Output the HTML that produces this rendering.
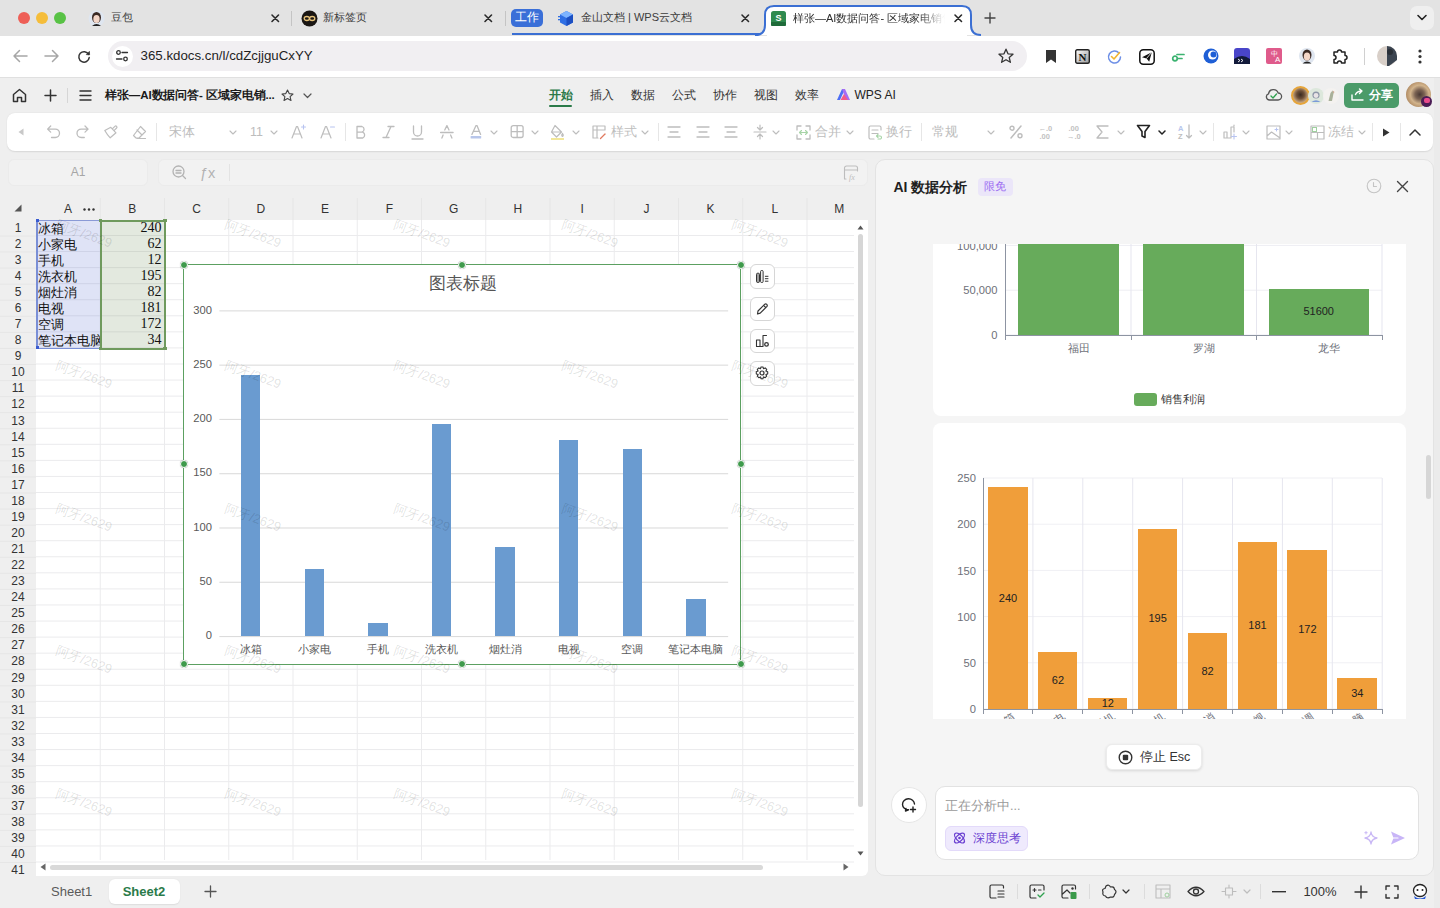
<!DOCTYPE html>
<html><head><meta charset="utf-8"><style>
*{box-sizing:border-box;margin:0;padding:0}
html,body{width:1440px;height:908px;overflow:hidden}
body{font-family:"Liberation Sans",sans-serif;background:#efefef;position:relative;color:#333}
.a{position:absolute}
svg.a{overflow:visible}
.t{position:absolute;white-space:nowrap;line-height:1}
</style></head><body>
<div class="a" style="left:0px;top:0px;width:1440px;height:36px;background:#e3e3e3"></div>
<div class="a" style="left:0px;top:36px;width:1440px;height:41px;background:#fff"></div>
<div class="a" style="left:0px;top:77px;width:1440px;height:1px;background:#e0e0e0"></div>
<div class="a" style="left:18px;top:12px;width:12px;height:12px;background:#ee5f57;border-radius:50%"></div>
<div class="a" style="left:36px;top:12px;width:12px;height:12px;background:#f5bd3a;border-radius:50%"></div>
<div class="a" style="left:54px;top:12px;width:12px;height:12px;background:#58c245;border-radius:50%"></div>
<svg class="a" style="left:88px;top:10px;" width="17" height="17" viewBox="0 0 17 17"><circle cx="8.5" cy="8.5" r="8" fill="#dfe6f0"/><ellipse cx="8.5" cy="7.5" rx="4.5" ry="5.5" fill="#3a2a25"/><ellipse cx="8.5" cy="9" rx="3.2" ry="4" fill="#f3d6c8"/><path d="M4 16 Q8.5 12 13 16" fill="#222"/></svg>
<div class="t" style="left:111px;top:11.40px;height:13.20px;line-height:13.20px;font-size:11px;color:#3c3c3c">豆包</div>
<svg class="a" style="left:270px;top:13px;" width="10" height="10" viewBox="0 0 10 10"><path d="M2 2L8.5 8.5M8.5 2L2 8.5" stroke="#2a2a2a" stroke-width="1.6" stroke-linecap="round"/></svg>
<div class="a" style="left:291px;top:11px;width:1px;height:15px;background:#c4c4c4"></div>
<svg class="a" style="left:301px;top:10px;" width="17" height="17" viewBox="0 0 17 17"><circle cx="8.5" cy="8.5" r="8" fill="#1a1613"/><ellipse cx="5.8" cy="8.5" rx="2.6" ry="2" fill="none" stroke="#e6c27a" stroke-width="1.3"/><ellipse cx="11.2" cy="8.5" rx="2.6" ry="2" fill="none" stroke="#e6c27a" stroke-width="1.3"/></svg>
<div class="t" style="left:323px;top:11.40px;height:13.20px;line-height:13.20px;font-size:11px;color:#3c3c3c">新标签页</div>
<svg class="a" style="left:483px;top:13px;" width="10" height="10" viewBox="0 0 10 10"><path d="M2 2L8.5 8.5M8.5 2L2 8.5" stroke="#2a2a2a" stroke-width="1.6" stroke-linecap="round"/></svg>
<div class="a" style="left:505px;top:11px;width:1px;height:15px;background:#c4c4c4"></div>
<div class="a" style="left:511px;top:9px;width:32px;height:18px;background:#3a6fd8;border-radius:5px"></div>
<div class="t" style="left:427px;top:11.10px;width:200px;height:13.80px;line-height:13.80px;text-align:center;font-size:11.5px;color:#fff;font-weight:500">工作</div>
<div class="a" style="left:512px;top:33px;width:255px;height:2px;background:#3b6fd3"></div>
<svg class="a" style="left:558px;top:10px;" width="17" height="17" viewBox="0 0 17 17"><path d="M8.5 1L15 4.5V12.5L8.5 16L2 12.5V4.5Z" fill="#2f6fe4"/><path d="M8.5 1L15 4.5L8.5 8L2 4.5Z" fill="#7db4ff"/><path d="M8.5 8V16L15 12.5V4.5Z" fill="#1c4fc2"/><rect x="0" y="6" width="5" height="1.3" fill="#2f6fe4"/><rect x="0" y="9" width="5" height="1.3" fill="#2f6fe4"/></svg>
<div class="t" style="left:581px;top:11.40px;height:13.20px;line-height:13.20px;font-size:11px;color:#3c3c3c">金山文档 | WPS云文档</div>
<svg class="a" style="left:740px;top:13px;" width="10" height="10" viewBox="0 0 10 10"><path d="M2 2L8.5 8.5M8.5 2L2 8.5" stroke="#2a2a2a" stroke-width="1.6" stroke-linecap="round"/></svg>
<svg class="a" style="left:755px;top:5px;" width="240" height="32" viewBox="0 0 240 32"><path d="M0 30 Q10 30 10 20 L10 10 Q10 1 19 1 L207 1 Q216 1 216 10 L216 20 Q216 30 226 30 Z" fill="#fff"/><path d="M0 30 Q10 30 10 20 L10 10 Q10 1 19 1 L207 1 Q216 1 216 10 L216 20 Q216 30 226 30" fill="none" stroke="#3b6fd3" stroke-width="2"/></svg>
<div class="a" style="left:767px;top:31px;width:200px;height:6px;background:#fff"></div>
<svg class="a" style="left:771px;top:11px;" width="15" height="15" viewBox="0 0 15 15"><rect x="0" y="0" width="15" height="15" rx="2.5" fill="#2f8a4f"/><rect x="0" y="11" width="15" height="4" rx="1" fill="#1f6b3a"/><text x="7.5" y="10" font-size="9" font-family="Liberation Sans" font-weight="bold" fill="#fff" text-anchor="middle">S</text></svg>
<div class="t" style="left:793px;top:10.8px;width:152px;overflow:hidden;font-size:11px;line-height:14.4px;color:#2c2c2c;-webkit-mask-image:linear-gradient(90deg,#000 82%,transparent)">样张—AI数据问答- 区域家电销售</div>
<svg class="a" style="left:953px;top:13px;" width="10" height="10" viewBox="0 0 10 10"><path d="M2 2L8.5 8.5M8.5 2L2 8.5" stroke="#2a2a2a" stroke-width="1.6" stroke-linecap="round"/></svg>
<svg class="a" style="left:984px;top:12px;" width="12" height="12" viewBox="0 0 12 12"><path d="M6 1V11M1 6H11" stroke="#444" stroke-width="1.4" stroke-linecap="round"/></svg>
<div class="a" style="left:1410px;top:6px;width:24px;height:24px;background:#efefef;border-radius:7px"></div>
<svg class="a" style="left:1417px;top:14px;" width="10" height="8" viewBox="0 0 10 8"><path d="M1 1.5L5 5.5L9 1.5" fill="none" stroke="#222" stroke-width="1.6" stroke-linecap="round" stroke-linejoin="round"/></svg>
<svg class="a" style="left:12px;top:49px;" width="16" height="14" viewBox="0 0 16 14"><path d="M15 7H2M7.5 1.5L2 7L7.5 12.5" fill="none" stroke="#a6a6a6" stroke-width="1.5" stroke-linecap="round" stroke-linejoin="round"/></svg>
<svg class="a" style="left:44px;top:49px;" width="16" height="14" viewBox="0 0 16 14"><path d="M1 7H14M8.5 1.5L14 7L8.5 12.5" fill="none" stroke="#a6a6a6" stroke-width="1.5" stroke-linecap="round" stroke-linejoin="round"/></svg>
<svg class="a" style="left:77px;top:50px;" width="14" height="14" viewBox="0 0 14 14"><path d="M11.6 4.4A5.2 5.2 0 1 0 12.2 7.6" fill="none" stroke="#333" stroke-width="1.5" stroke-linecap="round"/><path d="M9.3 4.6L12.6 4.8L12.4 1.4Z" fill="#333" stroke="#333" stroke-width="0.7" stroke-linejoin="round"/></svg>
<div class="a" style="left:108px;top:41px;width:919px;height:30px;background:#f1eff2;border-radius:15px"></div>
<div class="a" style="left:111.5px;top:45.5px;width:21px;height:21px;background:#fff;border-radius:50%"></div>
<svg class="a" style="left:115px;top:49px;" width="14" height="14" viewBox="0 0 14 14"><circle cx="3.5" cy="3.5" r="1.8" fill="none" stroke="#333" stroke-width="1.3"/><path d="M7 3.5H12.5M1.5 10H7" stroke="#333" stroke-width="1.3" stroke-linecap="round"/><circle cx="10.5" cy="10" r="1.8" fill="none" stroke="#333" stroke-width="1.3"/></svg>
<div class="t" style="left:140.5px;top:48.02px;height:15.96px;line-height:15.96px;font-size:13.3px;color:#1f1f1f">365.kdocs.cn/l/cdZcjjguCxYY</div>
<svg class="a" style="left:998px;top:48px;" width="16" height="16" viewBox="0 0 16 16"><path d="M8 1.2L10 5.8L15 6.2L11.2 9.4L12.4 14.3L8 11.7L3.6 14.3L4.8 9.4L1 6.2L6 5.8Z" fill="none" stroke="#333" stroke-width="1.3" stroke-linejoin="round"/></svg>
<svg class="a" style="left:1045px;top:49px;" width="12" height="15" viewBox="0 0 12 15"><path d="M1 1H11V14L6 10.5L1 14Z" fill="#333"/></svg>
<svg class="a" style="left:1075px;top:49px;" width="15" height="15" viewBox="0 0 15 15"><defs><linearGradient id="ng" x1="0" y1="0" x2="1" y2="1"><stop offset="0" stop-color="#fff"/><stop offset="1" stop-color="#9a9a9a"/></linearGradient></defs><rect x="0.7" y="0.7" width="13.6" height="13.6" rx="1.5" fill="url(#ng)" stroke="#222" stroke-width="1.4"/><text x="7.5" y="11.8" font-size="11" font-family="Liberation Serif" font-weight="bold" fill="#111" text-anchor="middle">N</text></svg>
<svg class="a" style="left:1107px;top:49px;" width="15" height="15" viewBox="0 0 15 15"><path d="M12 4A6 6 0 1 0 13.5 8" fill="none" stroke="#6d8fe6" stroke-width="1.5" stroke-linecap="round"/><path d="M4.5 7.5L7 10L12.5 3.5" fill="none" stroke="#f2b531" stroke-width="1.6" stroke-linecap="round" stroke-linejoin="round"/></svg>
<svg class="a" style="left:1139px;top:49px;" width="16" height="16" viewBox="0 0 16 16"><rect x="0.8" y="0.8" width="14.4" height="14.4" rx="3.5" fill="#fff" stroke="#111" stroke-width="1.5"/><path d="M3 8.3L12.8 3.2L10.2 12.8L7.6 9.4Z" fill="#111"/><path d="M7.6 9.4L12.8 3.2" stroke="#fff" stroke-width="0.8"/></svg>
<svg class="a" style="left:1171px;top:49px;" width="15" height="15" viewBox="0 0 15 15"><circle cx="4" cy="9.5" r="2.3" fill="none" stroke="#3cb371" stroke-width="1.7"/><path d="M6.5 9.5H11M6 5.5H13" fill="none" stroke="#3cb371" stroke-width="1.7" stroke-linecap="round"/></svg>
<svg class="a" style="left:1203px;top:48px;" width="16" height="16" viewBox="0 0 16 16"><circle cx="8" cy="8" r="7.5" fill="#1f5fd6"/><circle cx="9.5" cy="7" r="4.5" fill="#fff"/><circle cx="10.5" cy="6.5" r="3" fill="#1f5fd6"/></svg>
<svg class="a" style="left:1234px;top:48px;" width="16" height="16" viewBox="0 0 16 16"><rect x="0" y="0" width="16" height="16" rx="3" fill="#4945c9"/><path d="M0 11Q8 5 16 11V16H0Z" fill="#121a3a"/><path d="M4 11L6 12.5L4 14M7 11L9 12.5L7 14" stroke="#fff" stroke-width="0.9" fill="none"/></svg>
<svg class="a" style="left:1266px;top:48px;" width="16" height="16" viewBox="0 0 16 16"><rect x="0" y="0" width="16" height="16" rx="2" fill="#df5b8b"/><text x="5" y="8" font-size="7" fill="#fff" font-family="Liberation Sans">中</text><text x="9" y="14" font-size="8" fill="#fff" font-family="Liberation Sans">A</text></svg>
<svg class="a" style="left:1299px;top:48px;" width="16" height="16" viewBox="0 0 16 16"><circle cx="8" cy="8" r="8" fill="#dfe6f0"/><ellipse cx="8" cy="7" rx="4.5" ry="5.5" fill="#3a2a25"/><ellipse cx="8" cy="8.5" rx="3.2" ry="4" fill="#f3d6c8"/><path d="M3.5 15.5Q8 11.5 12.5 15.5" fill="#222"/></svg>
<svg class="a" style="left:1332px;top:48px;" width="16" height="16" viewBox="0 0 16 16"><path d="M2 4H5.5A2 2 0 0 1 9.5 4H13V7.5A2 2 0 0 1 13 11.5V15H9.5A2 2 0 0 0 5.5 15H2V11.5A2 2 0 0 0 2 7.5Z" fill="none" stroke="#222" stroke-width="1.5" stroke-linejoin="round"/></svg>
<div class="a" style="left:1364px;top:48px;width:1px;height:17px;background:#d0d0d0"></div>
<svg class="a" style="left:1377px;top:46px;" width="20" height="20" viewBox="0 0 20 20"><circle cx="10" cy="10" r="10" fill="#d8cfc8"/><path d="M10 0A10 10 0 0 1 20 10V14L12 20H10Z" fill="#3b4450"/><circle cx="13" cy="6" r="3" fill="#2a2f36"/></svg>
<svg class="a" style="left:1418px;top:49px;" width="4" height="15" viewBox="0 0 4 15"><circle cx="2" cy="2" r="1.6" fill="#333"/><circle cx="2" cy="7.5" r="1.6" fill="#333"/><circle cx="2" cy="13" r="1.6" fill="#333"/></svg>
<div class="a" style="left:0px;top:78px;width:1440px;height:830px;background:#efefef"></div>
<svg class="a" style="left:12px;top:88px;" width="15" height="15" viewBox="0 0 15 15"><path d="M1.5 6.5L7.5 1.5L13.5 6.5V13.5H9.5V9.5H5.5V13.5H1.5Z" fill="none" stroke="#333" stroke-width="1.5" stroke-linecap="round" stroke-linejoin="round" /></svg>
<svg class="a" style="left:44px;top:89px;" width="13" height="13" viewBox="0 0 13 13"><path d="M6.5 1V12M1 6.5H12" fill="none" stroke="#333" stroke-width="1.5" stroke-linecap="round" stroke-linejoin="round" /></svg>
<div class="a" style="left:67px;top:88px;width:1px;height:15px;background:#d6d6d6"></div>
<svg class="a" style="left:79px;top:90px;" width="13" height="11" viewBox="0 0 13 11"><path d="M1 1H12M1 5.5H12M1 10H12" fill="none" stroke="#333" stroke-width="1.4" stroke-linecap="round" stroke-linejoin="round" /></svg>
<div class="t" style="left:105px;top:88.60px;height:13.80px;line-height:13.80px;font-size:11.5px;color:#1a1a1a;font-weight:bold;letter-spacing:-0.1px">样张—AI数据问答- 区域家电销...</div>
<svg class="a" style="left:281px;top:89px;" width="13" height="13" viewBox="0 0 13 13"><path d="M6.5 1L8.2 4.6L12 5L9.1 7.6L10 11.5L6.5 9.5L3 11.5L3.9 7.6L1 5L4.8 4.6Z" fill="none" stroke="#444" stroke-width="1.1" stroke-linecap="round" stroke-linejoin="round" /></svg>
<svg class="a" style="left:303px;top:93px;" width="9" height="6" viewBox="0 0 9 6"><path d="M1 1L4.5 4.5L8 1" fill="none" stroke="#555" stroke-width="1.2" stroke-linecap="round" stroke-linejoin="round" /></svg>
<div class="t" style="left:548.5px;top:87.80px;height:14.40px;line-height:14.40px;font-size:12px;color:#2a7a49;font-weight:bold">开始</div>
<div class="t" style="left:589.5px;top:87.80px;height:14.40px;line-height:14.40px;font-size:12px;color:#333;">插入</div>
<div class="t" style="left:630.5px;top:87.80px;height:14.40px;line-height:14.40px;font-size:12px;color:#333;">数据</div>
<div class="t" style="left:671.5px;top:87.80px;height:14.40px;line-height:14.40px;font-size:12px;color:#333;">公式</div>
<div class="t" style="left:712.5px;top:87.80px;height:14.40px;line-height:14.40px;font-size:12px;color:#333;">协作</div>
<div class="t" style="left:753.5px;top:87.80px;height:14.40px;line-height:14.40px;font-size:12px;color:#333;">视图</div>
<div class="t" style="left:794.5px;top:87.80px;height:14.40px;line-height:14.40px;font-size:12px;color:#333;">效率</div>
<div class="a" style="left:549px;top:105px;width:22.5px;height:2px;background:#2a7a49;border-radius:1px"></div>
<svg class="a" style="left:836px;top:88px;" width="15" height="13" viewBox="0 0 15 13"><path d="M1 12L6 1H9L4 12Z" fill="#4d6ef5"/><path d="M6 1H9L14 12H10Z" fill="#a46cf4"/><path d="M4.5 12L8 6L12 12Z" fill="#f25a8a"/></svg>
<div class="t" style="left:854.5px;top:87.80px;height:14.40px;line-height:14.40px;font-size:12px;color:#222">WPS AI</div>
<svg class="a" style="left:1265px;top:88px;" width="17" height="13" viewBox="0 0 17 13"><path d="M4.5 12H13A3.5 3.5 0 0 0 13.2 5A5 5 0 0 0 3.5 5.8A3.2 3.2 0 0 0 4.5 12Z" fill="none" stroke="#555" stroke-width="1.3"/><path d="M6 8L8 10L11.5 6" fill="none" stroke="#2fa14f" stroke-width="1.3" stroke-linecap="round" stroke-linejoin="round"/></svg>
<div class="a" style="left:1291px;top:86px;width:19px;height:19px;border-radius:50%;background:radial-gradient(circle at 50% 45%,#3a2a20 0,#6e5038 35%,#c7a680 70%,#a88a66 100%);border:2px solid #e6a53a"></div>
<div class="a" style="left:1307.5px;top:87.5px;width:16px;height:16px;border-radius:50%;background:#dde8dc"></div>
<svg class="a" style="left:1309.5px;top:89.5px;" width="12" height="13" viewBox="0 0 12 13"><circle cx="6" cy="5" r="3.6" fill="#8e97a8"/><circle cx="6" cy="5.5" r="2.4" fill="#e9e4e6"/><path d="M1.5 12Q6 8.5 10.5 12" fill="#7b9bd8"/></svg>
<div class="a" style="left:1322.5px;top:87.5px;width:16px;height:16px;border-radius:50%;background:#f4f2f0"></div>
<svg class="a" style="left:1326px;top:89px;" width="9" height="13" viewBox="0 0 9 13"><path d="M2.5 12L4.5 4L6.5 1.5L7.5 4.5L6 12Z" fill="#a9b19a"/><path d="M6.5 1.5L8.5 3L7.5 4.5Z" fill="#c9a38a"/></svg>
<div class="a" style="left:1344px;top:82.5px;width:55px;height:25px;background:#4b9b69;border-radius:5px"></div>
<svg class="a" style="left:1351px;top:89px;" width="14" height="12" viewBox="0 0 14 12"><path d="M1 6V11H12M4.5 5.5Q6 2 11 2M8.5 0L11 2L8.5 4.5" fill="none" stroke="#fff" stroke-width="1.4" stroke-linecap="round" stroke-linejoin="round" /></svg>
<div class="t" style="left:1368.5px;top:87.80px;height:14.40px;line-height:14.40px;font-size:12px;color:#fff;font-weight:bold">分享</div>
<div class="a" style="left:1405.5px;top:82px;width:25px;height:25px;border-radius:50%;background:radial-gradient(circle at 55% 50%,#4a3a35 0,#7a6252 25%,#d2b48c 50%,#b08a62 75%,#3b2a20 100%)"></div>
<div class="a" style="left:1421px;top:95.5px;width:11px;height:11px;border-radius:50%;background:#4b1d55"></div>
<div class="a" style="left:1423.5px;top:98px;width:6px;height:5px;border-radius:2px;background:#e94a8c"></div>
<div class="a" style="left:7px;top:113px;width:1426px;height:38px;background:#fff;border-radius:8px;box-shadow:0 0.5px 1.5px rgba(0,0,0,0.10)"></div>
<svg class="a" style="left:18px;top:128px;" width="6" height="8" viewBox="0 0 6 8"><path d="M5.5 0.5V7.5L0.5 4Z" fill="#c8c8c8"/></svg>
<svg class="a" style="left:46px;top:125px;" width="15" height="15" viewBox="0 0 15 15"><path d="M4.7 1L1.6 4.1L4.7 7.1M1.6 4.1H9.3A4.2 4.2 0 0 1 9.3 12.5H5.5" fill="none" stroke="#bdbdbd" stroke-width="1.3" stroke-linecap="round" stroke-linejoin="round" /></svg>
<svg class="a" style="left:75px;top:125px;" width="15" height="15" viewBox="0 0 15 15"><path d="M10 1L13.1 4.1L10 7.1M13.1 4.1H6.2A4.2 4.2 0 0 0 6.2 12.5H9.3" fill="none" stroke="#bdbdbd" stroke-width="1.3" stroke-linecap="round" stroke-linejoin="round" /></svg>
<svg class="a" style="left:104px;top:125px;" width="15" height="15" viewBox="0 0 15 15"><path d="M0.8 5.5L6.8 2.3L12 7.8L6.2 12.8Q3.2 9.8 0.8 5.5ZM8.8 3.4L10.9 1.3A1.2 1.2 0 0 1 12.6 3L10.5 5.1" fill="none" stroke="#bdbdbd" stroke-width="1.2" stroke-linecap="round" stroke-linejoin="round" /></svg>
<svg class="a" style="left:132px;top:125px;" width="15" height="15" viewBox="0 0 15 15"><path d="M8.5 1.5L13.5 6.5L7 13H4L1.5 10.5ZM5 5L10 10M5 13.5H13.5" fill="none" stroke="#bdbdbd" stroke-width="1.2" stroke-linecap="round" stroke-linejoin="round" /></svg>
<div class="a" style="left:156px;top:123px;width:1px;height:18px;background:#e6e6e6"></div>
<div class="t" style="left:169px;top:124.50px;height:15.00px;line-height:15.00px;font-size:12.5px;color:#bdbdbd">宋体</div>
<svg class="a" style="left:229px;top:130px;" width="8" height="5" viewBox="0 0 8 5"><path d="M1 1L4 4L7 1" fill="none" stroke="#bdbdbd" stroke-width="1.1" stroke-linecap="round" stroke-linejoin="round" /></svg>
<div class="t" style="left:250px;top:124.50px;height:15.00px;line-height:15.00px;font-size:12.5px;color:#bdbdbd">11</div>
<svg class="a" style="left:270px;top:130px;" width="8" height="5" viewBox="0 0 8 5"><path d="M1 1L4 4L7 1" fill="none" stroke="#bdbdbd" stroke-width="1.1" stroke-linecap="round" stroke-linejoin="round" /></svg>
<svg class="a" style="left:291px;top:124px;" width="16" height="16" viewBox="0 0 16 16"><path d="M1 14L5.5 2.5H6.5L11 14M2.8 10H9.2" fill="none" stroke="#bdbdbd" stroke-width="1.2" stroke-linecap="round" stroke-linejoin="round" /><path d="M12.5 1V5M10.5 3H14.5" fill="none" stroke="#b8c4f0" stroke-width="1.1" stroke-linecap="round" stroke-linejoin="round" /></svg>
<svg class="a" style="left:320px;top:124px;" width="16" height="16" viewBox="0 0 16 16"><path d="M1 14L5.5 2.5H6.5L11 14M2.8 10H9.2" fill="none" stroke="#bdbdbd" stroke-width="1.2" stroke-linecap="round" stroke-linejoin="round" /><path d="M10.5 3H14.5" fill="none" stroke="#b8c4f0" stroke-width="1.1" stroke-linecap="round" stroke-linejoin="round" /></svg>
<div class="a" style="left:345px;top:123px;width:1px;height:18px;background:#e6e6e6"></div>
<svg class="a" style="left:355px;top:125px;" width="12" height="14" viewBox="0 0 12 14"><path d="M2 1.5H7A3 3 0 0 1 7 7.2H2ZM2 7.2H7.8A3.2 3.2 0 0 1 7.8 13H2Z" fill="none" stroke="#bdbdbd" stroke-width="1.3" stroke-linecap="round" stroke-linejoin="round" /></svg>
<svg class="a" style="left:382px;top:125px;" width="13" height="14" viewBox="0 0 13 14"><path d="M6 1.5H12M1 12.5H7M9 1.5L4 12.5" fill="none" stroke="#bdbdbd" stroke-width="1.3" stroke-linecap="round" stroke-linejoin="round" /></svg>
<svg class="a" style="left:411px;top:125px;" width="13" height="15" viewBox="0 0 13 15"><path d="M2.5 1V7A4 4 0 0 0 10.5 7V1M1 14H12" fill="none" stroke="#bdbdbd" stroke-width="1.3" stroke-linecap="round" stroke-linejoin="round" /></svg>
<svg class="a" style="left:439px;top:124px;" width="16" height="16" viewBox="0 0 16 16"><path d="M5.75 6L7.9 1.6L10 6M1.6 8.5H14.1M4.1 11L2.9 14.1M11.6 11L12.9 14.1" fill="none" stroke="#bdbdbd" stroke-width="1.3" stroke-linecap="round" stroke-linejoin="round" /></svg>
<svg class="a" style="left:469px;top:124px;" width="15" height="16" viewBox="0 0 15 16"><path d="M2.9 10.4L7 1.6H8L11.6 10.4M4.3 7.4H10.3" fill="none" stroke="#bdbdbd" stroke-width="1.3" stroke-linecap="round" stroke-linejoin="round" /><rect x="1.6" y="12" width="10.6" height="2.5" rx="0.5" fill="#b8c6ea"/></svg>
<svg class="a" style="left:490px;top:130px;" width="8" height="5" viewBox="0 0 8 5"><path d="M1 1L4 4L7 1" fill="none" stroke="#bdbdbd" stroke-width="1.1" stroke-linecap="round" stroke-linejoin="round" /></svg>
<svg class="a" style="left:510px;top:125px;" width="15" height="14" viewBox="0 0 15 14"><path d="M3.2 0.7H11.1A2 2 0 0 1 13.1 2.7V10.5A2 2 0 0 1 11.1 12.5H3.2A2 2 0 0 1 1.2 10.5V2.7A2 2 0 0 1 3.2 0.7ZM7.15 0.7V12.5M1.2 6.6H13.1" fill="none" stroke="#bdbdbd" stroke-width="1.3" stroke-linecap="round" stroke-linejoin="round" /></svg>
<svg class="a" style="left:531px;top:130px;" width="8" height="5" viewBox="0 0 8 5"><path d="M1 1L4 4L7 1" fill="none" stroke="#bdbdbd" stroke-width="1.1" stroke-linecap="round" stroke-linejoin="round" /></svg>
<svg class="a" style="left:550px;top:124px;" width="15" height="16" viewBox="0 0 15 16"><path d="M5 1.5L11.5 8L6.5 13L1.5 8ZM1.5 8H11.5M12.5 9.5Q14 11.5 12.5 12.5Q11 11.5 12.5 9.5" fill="none" stroke="#bdbdbd" stroke-width="1.2" stroke-linecap="round" stroke-linejoin="round" /><rect x="1" y="14" width="13" height="2" fill="#f2e79a"/></svg>
<svg class="a" style="left:572px;top:130px;" width="8" height="5" viewBox="0 0 8 5"><path d="M1 1L4 4L7 1" fill="none" stroke="#bdbdbd" stroke-width="1.1" stroke-linecap="round" stroke-linejoin="round" /></svg>
<svg class="a" style="left:592px;top:125px;" width="15" height="15" viewBox="0 0 15 15"><path d="M1 1H13V5M1 1V13H6M5 1V13M1 5H13" fill="none" stroke="#bdbdbd" stroke-width="1.2" stroke-linecap="round" stroke-linejoin="round" /><path d="M8.5 13.5L13 9" fill="none" stroke="#e07a5f" stroke-width="1.3" stroke-linecap="round" stroke-linejoin="round" /></svg>
<div class="t" style="left:611px;top:124.50px;height:15.00px;line-height:15.00px;font-size:12.5px;color:#bdbdbd">样式</div>
<svg class="a" style="left:641px;top:130px;" width="8" height="5" viewBox="0 0 8 5"><path d="M1 1L4 4L7 1" fill="none" stroke="#bdbdbd" stroke-width="1.1" stroke-linecap="round" stroke-linejoin="round" /></svg>
<div class="a" style="left:658px;top:123px;width:1px;height:18px;background:#e6e6e6"></div>
<svg class="a" style="left:667px;top:126px;" width="14" height="12" viewBox="0 0 14 12"><path d="M1 1H13M3 6H11M1 11H13" fill="none" stroke="#bdbdbd" stroke-width="1.3" stroke-linecap="round" stroke-linejoin="round" /></svg>
<svg class="a" style="left:696px;top:126px;" width="14" height="12" viewBox="0 0 14 12"><path d="M1 1H13M3 6H11M1 11H13" fill="none" stroke="#bdbdbd" stroke-width="1.3" stroke-linecap="round" stroke-linejoin="round" /></svg>
<svg class="a" style="left:724px;top:126px;" width="14" height="12" viewBox="0 0 14 12"><path d="M1 1H13M3 6H11M1 11H13" fill="none" stroke="#bdbdbd" stroke-width="1.3" stroke-linecap="round" stroke-linejoin="round" /></svg>
<svg class="a" style="left:753px;top:124px;" width="14" height="16" viewBox="0 0 14 16"><path d="M1 8H13M7 1V6M4.5 3.5L7 6L9.5 3.5M7 15V10M4.5 12.5L7 10L9.5 12.5" fill="none" stroke="#bdbdbd" stroke-width="1.2" stroke-linecap="round" stroke-linejoin="round" /></svg>
<svg class="a" style="left:772px;top:130px;" width="8" height="5" viewBox="0 0 8 5"><path d="M1 1L4 4L7 1" fill="none" stroke="#bdbdbd" stroke-width="1.1" stroke-linecap="round" stroke-linejoin="round" /></svg>
<svg class="a" style="left:796px;top:125px;" width="15" height="15" viewBox="0 0 15 15"><path d="M5 1H1V5M10 1H14V5M5 14H1V10M10 14H14V10" fill="none" stroke="#bdbdbd" stroke-width="1.3" stroke-linecap="round" stroke-linejoin="round" /><path d="M3.5 7.5H11.5M9.5 5.5L11.5 7.5L9.5 9.5M5.5 5.5L3.5 7.5L5.5 9.5" fill="none" stroke="#a7d4a7" stroke-width="1.1" stroke-linecap="round" stroke-linejoin="round" /></svg>
<div class="t" style="left:815px;top:124.50px;height:15.00px;line-height:15.00px;font-size:12.5px;color:#bdbdbd">合并</div>
<svg class="a" style="left:846px;top:130px;" width="8" height="5" viewBox="0 0 8 5"><path d="M1 1L4 4L7 1" fill="none" stroke="#bdbdbd" stroke-width="1.1" stroke-linecap="round" stroke-linejoin="round" /></svg>
<svg class="a" style="left:868px;top:125px;" width="14" height="15" viewBox="0 0 14 15"><path d="M13 5V2.5A1.5 1.5 0 0 0 11.5 1H2.5A1.5 1.5 0 0 0 1 2.5V12.5A1.5 1.5 0 0 0 2.5 14H6M4 5H10M4 8.5H10" fill="none" stroke="#bdbdbd" stroke-width="1.2" stroke-linecap="round" stroke-linejoin="round" /><path d="M10 14H12A1.5 1.5 0 0 0 12 11H9M10 9.5L8.5 11L10 12.5" fill="none" stroke="#a7d4a7" stroke-width="1.1" stroke-linecap="round" stroke-linejoin="round" /></svg>
<div class="t" style="left:886px;top:124.50px;height:15.00px;line-height:15.00px;font-size:12.5px;color:#bdbdbd">换行</div>
<div class="a" style="left:921px;top:123px;width:1px;height:18px;background:#e6e6e6"></div>
<div class="t" style="left:932px;top:124.50px;height:15.00px;line-height:15.00px;font-size:12.5px;color:#bdbdbd">常规</div>
<svg class="a" style="left:987px;top:130px;" width="8" height="5" viewBox="0 0 8 5"><path d="M1 1L4 4L7 1" fill="none" stroke="#bdbdbd" stroke-width="1.1" stroke-linecap="round" stroke-linejoin="round" /></svg>
<svg class="a" style="left:1009px;top:125px;" width="14" height="14" viewBox="0 0 14 14"><path d="M2 13L12 1" fill="none" stroke="#bdbdbd" stroke-width="1.5" stroke-linecap="round" stroke-linejoin="round" /><circle cx="3" cy="3.2" r="2" fill="none" stroke="#bdbdbd" stroke-width="1.4"/><circle cx="11" cy="10.8" r="2" fill="none" stroke="#bdbdbd" stroke-width="1.4"/></svg>
<svg class="a" style="left:1036px;top:123px;" width="18" height="18" viewBox="0 0 18 18"><text x="2.5" y="7.5" font-size="7.5" font-weight="bold" fill="#c2c2c2" font-family="Liberation Sans">←.0</text><text x="3.5" y="16" font-size="7.5" font-weight="bold" fill="#c2c2c2" font-family="Liberation Sans">.00</text></svg>
<svg class="a" style="left:1065px;top:123px;" width="18" height="18" viewBox="0 0 18 18"><text x="3.5" y="7.5" font-size="7.5" font-weight="bold" fill="#c2c2c2" font-family="Liberation Sans">.00</text><text x="2" y="16" font-size="7.5" font-weight="bold" fill="#c2c2c2" font-family="Liberation Sans">→.0</text></svg>
<svg class="a" style="left:1096px;top:125px;" width="13" height="14" viewBox="0 0 13 14"><path d="M12 1H1L6 7L1 13H12" fill="none" stroke="#bdbdbd" stroke-width="1.3" stroke-linecap="round" stroke-linejoin="round" /></svg>
<svg class="a" style="left:1117px;top:130px;" width="8" height="5" viewBox="0 0 8 5"><path d="M1 1L4 4L7 1" fill="none" stroke="#bdbdbd" stroke-width="1.1" stroke-linecap="round" stroke-linejoin="round" /></svg>
<svg class="a" style="left:1136px;top:124px;" width="15" height="15" viewBox="0 0 15 15"><path d="M1.5 1.5H13.5L9 7.5V13.5L6 12V7.5Z" fill="none" stroke="#222" stroke-width="1.6" stroke-linecap="round" stroke-linejoin="round" /></svg>
<svg class="a" style="left:1158px;top:130px;" width="8" height="5" viewBox="0 0 8 5"><path d="M1 1L4 4L7 1" fill="none" stroke="#bdbdbd" stroke-width="1.1" stroke-linecap="round" stroke-linejoin="round" /></svg>
<svg class="a" style="left:1158px;top:130px;" width="8" height="5" viewBox="0 0 8 5"><path d="M1 1L4 4L7 1" fill="none" stroke="#222" stroke-width="1.4" stroke-linecap="round" stroke-linejoin="round" /></svg>
<svg class="a" style="left:1178px;top:124px;" width="15" height="16" viewBox="0 0 15 16"><text x="0" y="7" font-size="7.5" font-weight="bold" fill="#b7c6ec" font-family="Liberation Sans">A</text><text x="0" y="15" font-size="7.5" font-weight="bold" fill="#bdbdbd" font-family="Liberation Sans">Z</text><path d="M11 1V14M8.5 11.5L11 14L13.5 11.5" fill="none" stroke="#bdbdbd" stroke-width="1.3" stroke-linecap="round" stroke-linejoin="round" /></svg>
<svg class="a" style="left:1199px;top:130px;" width="8" height="5" viewBox="0 0 8 5"><path d="M1 1L4 4L7 1" fill="none" stroke="#bdbdbd" stroke-width="1.1" stroke-linecap="round" stroke-linejoin="round" /></svg>
<div class="a" style="left:1213px;top:123px;width:1px;height:18px;background:#e6e6e6"></div>
<svg class="a" style="left:1223px;top:124px;" width="15" height="16" viewBox="0 0 15 16"><path d="M1 14V8H4V14ZM4 14H8V3H11V8M11 2V1" fill="none" stroke="#bdbdbd" stroke-width="1.2" stroke-linecap="round" stroke-linejoin="round" /><path d="M11 10V15M8.5 12.5H13.5" fill="none" stroke="#b8c4f0" stroke-width="1.1" stroke-linecap="round" stroke-linejoin="round" /></svg>
<svg class="a" style="left:1242px;top:130px;" width="8" height="5" viewBox="0 0 8 5"><path d="M1 1L4 4L7 1" fill="none" stroke="#bdbdbd" stroke-width="1.1" stroke-linecap="round" stroke-linejoin="round" /></svg>
<svg class="a" style="left:1266px;top:125px;" width="15" height="15" viewBox="0 0 15 15"><path d="M1 1H14V14H1ZM1 11L5.5 7L14 13" fill="none" stroke="#bdbdbd" stroke-width="1.2" stroke-linecap="round" stroke-linejoin="round" /><path d="M10.5 3V6M9 4.5H12" fill="none" stroke="#b8c4f0" stroke-width="1" stroke-linecap="round" stroke-linejoin="round" /></svg>
<svg class="a" style="left:1285px;top:130px;" width="8" height="5" viewBox="0 0 8 5"><path d="M1 1L4 4L7 1" fill="none" stroke="#bdbdbd" stroke-width="1.1" stroke-linecap="round" stroke-linejoin="round" /></svg>
<svg class="a" style="left:1310px;top:125px;" width="15" height="15" viewBox="0 0 15 15"><path d="M1 1H14V14H1ZM1 7.5H14M7.5 7.5V14" fill="none" stroke="#bdbdbd" stroke-width="1.2" stroke-linecap="round" stroke-linejoin="round" /><rect x="2.5" y="2.5" width="4" height="4" fill="none" stroke="#9fd09f" stroke-width="1"/></svg>
<div class="t" style="left:1328px;top:124.50px;height:15.00px;line-height:15.00px;font-size:12.5px;color:#bdbdbd">冻结</div>
<svg class="a" style="left:1358px;top:130px;" width="8" height="5" viewBox="0 0 8 5"><path d="M1 1L4 4L7 1" fill="none" stroke="#bdbdbd" stroke-width="1.1" stroke-linecap="round" stroke-linejoin="round" /></svg>
<div class="a" style="left:1372px;top:123px;width:1px;height:18px;background:#e6e6e6"></div>
<svg class="a" style="left:1382px;top:128px;" width="8" height="9" viewBox="0 0 8 9"><path d="M1 0.5L7.5 4.5L1 8.5Z" fill="#333"/></svg>
<div class="a" style="left:1400px;top:123px;width:1px;height:18px;background:#e6e6e6"></div>
<svg class="a" style="left:1409px;top:129px;" width="12" height="7" viewBox="0 0 12 7"><path d="M1 6L6 1L11 6" fill="none" stroke="#333" stroke-width="1.5" stroke-linecap="round" stroke-linejoin="round" /></svg>
<div class="a" style="left:8px;top:159px;width:140px;height:27px;background:#f2f2f2;border-radius:6px;border:1px solid #ebebeb"></div>
<div class="t" style="left:-22px;top:165.30px;width:200px;height:14.40px;line-height:14.40px;text-align:center;font-size:12px;color:#a6a6a6">A1</div>
<div class="a" style="left:158px;top:159px;width:710px;height:27px;background:#f2f2f2;border-radius:6px;border:1px solid #ebebeb"></div>
<svg class="a" style="left:172px;top:165px;" width="15" height="15" viewBox="0 0 15 15"><circle cx="6.5" cy="6.5" r="5.5" fill="none" stroke="#b3b3b3" stroke-width="1.3"/><path d="M10.5 10.5L13.5 13.5M4 5.5H9M4 8H9" fill="none" stroke="#b3b3b3" stroke-width="1.3" stroke-linecap="round" stroke-linejoin="round" /></svg>
<div class="t" style="left:200px;top:164.5px;font-size:14.5px;line-height:17px;color:#b3b3b3">ƒx</div>
<div class="a" style="left:229px;top:164px;width:1px;height:17px;background:#e3e3e3"></div>
<svg class="a" style="left:843px;top:165px;" width="16" height="16" viewBox="0 0 16 16"><path d="M1.5 14V3A2 2 0 0 1 3.5 1H12.5A2 2 0 0 1 14.5 3V6M1.5 5H14.5M1.5 14H3" fill="none" stroke="#bdbdbd" stroke-width="1.1" stroke-linecap="round" stroke-linejoin="round" /><text x="6" y="15" font-size="8" font-style="italic" fill="#bdbdbd" font-family="Liberation Serif">fx</text></svg>
<div class="a" style="left:36px;top:220px;width:832px;height:655.5px;background:#fff;border-radius:0 0 6px 0"></div>
<svg class="a" style="left:0px;top:220px;" width="36" height="660" viewBox="0 0 36 660"><rect x="0" y="15.47" width="36" height="1" fill="#e6e6e6"/><rect x="0" y="31.53" width="36" height="1" fill="#e6e6e6"/><rect x="0" y="47.60" width="36" height="1" fill="#e6e6e6"/><rect x="0" y="63.66" width="36" height="1" fill="#e6e6e6"/><rect x="0" y="79.73" width="36" height="1" fill="#e6e6e6"/><rect x="0" y="95.79" width="36" height="1" fill="#e6e6e6"/><rect x="0" y="111.86" width="36" height="1" fill="#e6e6e6"/><rect x="0" y="127.92" width="36" height="1" fill="#e6e6e6"/><rect x="0" y="143.99" width="36" height="1" fill="#e6e6e6"/><rect x="0" y="160.05" width="36" height="1" fill="#e6e6e6"/><rect x="0" y="176.12" width="36" height="1" fill="#e6e6e6"/><rect x="0" y="192.18" width="36" height="1" fill="#e6e6e6"/><rect x="0" y="208.25" width="36" height="1" fill="#e6e6e6"/><rect x="0" y="224.31" width="36" height="1" fill="#e6e6e6"/><rect x="0" y="240.38" width="36" height="1" fill="#e6e6e6"/><rect x="0" y="256.44" width="36" height="1" fill="#e6e6e6"/><rect x="0" y="272.50" width="36" height="1" fill="#e6e6e6"/><rect x="0" y="288.57" width="36" height="1" fill="#e6e6e6"/><rect x="0" y="304.63" width="36" height="1" fill="#e6e6e6"/><rect x="0" y="320.70" width="36" height="1" fill="#e6e6e6"/><rect x="0" y="336.76" width="36" height="1" fill="#e6e6e6"/><rect x="0" y="352.83" width="36" height="1" fill="#e6e6e6"/><rect x="0" y="368.89" width="36" height="1" fill="#e6e6e6"/><rect x="0" y="384.96" width="36" height="1" fill="#e6e6e6"/><rect x="0" y="401.03" width="36" height="1" fill="#e6e6e6"/><rect x="0" y="417.09" width="36" height="1" fill="#e6e6e6"/><rect x="0" y="433.16" width="36" height="1" fill="#e6e6e6"/><rect x="0" y="449.22" width="36" height="1" fill="#e6e6e6"/><rect x="0" y="465.29" width="36" height="1" fill="#e6e6e6"/><rect x="0" y="481.35" width="36" height="1" fill="#e6e6e6"/><rect x="0" y="497.42" width="36" height="1" fill="#e6e6e6"/><rect x="0" y="513.48" width="36" height="1" fill="#e6e6e6"/><rect x="0" y="529.55" width="36" height="1" fill="#e6e6e6"/><rect x="0" y="545.61" width="36" height="1" fill="#e6e6e6"/><rect x="0" y="561.68" width="36" height="1" fill="#e6e6e6"/><rect x="0" y="577.74" width="36" height="1" fill="#e6e6e6"/><rect x="0" y="593.81" width="36" height="1" fill="#e6e6e6"/><rect x="0" y="609.87" width="36" height="1" fill="#e6e6e6"/><rect x="0" y="625.94" width="36" height="1" fill="#e6e6e6"/><rect x="0" y="642.00" width="36" height="1" fill="#e6e6e6"/></svg>
<svg class="a" style="left:0px;top:198px;" width="868" height="22" viewBox="0 0 868 22"><rect x="99.75" y="0" width="1" height="22" fill="#e6e6e6"/><rect x="164.00" y="0" width="1" height="22" fill="#e6e6e6"/><rect x="228.25" y="0" width="1" height="22" fill="#e6e6e6"/><rect x="292.50" y="0" width="1" height="22" fill="#e6e6e6"/><rect x="356.75" y="0" width="1" height="22" fill="#e6e6e6"/><rect x="421.00" y="0" width="1" height="22" fill="#e6e6e6"/><rect x="485.25" y="0" width="1" height="22" fill="#e6e6e6"/><rect x="549.50" y="0" width="1" height="22" fill="#e6e6e6"/><rect x="613.75" y="0" width="1" height="22" fill="#e6e6e6"/><rect x="678.00" y="0" width="1" height="22" fill="#e6e6e6"/><rect x="742.25" y="0" width="1" height="22" fill="#e6e6e6"/><rect x="806.50" y="0" width="1" height="22" fill="#e6e6e6"/></svg>
<div class="t" style="left:-31.875px;top:202.30px;width:200px;height:14.40px;line-height:14.40px;text-align:center;font-size:12px;color:#333">A</div>
<div class="t" style="left:32.375px;top:202.30px;width:200px;height:14.40px;line-height:14.40px;text-align:center;font-size:12px;color:#333">B</div>
<div class="t" style="left:96.625px;top:202.30px;width:200px;height:14.40px;line-height:14.40px;text-align:center;font-size:12px;color:#333">C</div>
<div class="t" style="left:160.875px;top:202.30px;width:200px;height:14.40px;line-height:14.40px;text-align:center;font-size:12px;color:#333">D</div>
<div class="t" style="left:225.125px;top:202.30px;width:200px;height:14.40px;line-height:14.40px;text-align:center;font-size:12px;color:#333">E</div>
<div class="t" style="left:289.375px;top:202.30px;width:200px;height:14.40px;line-height:14.40px;text-align:center;font-size:12px;color:#333">F</div>
<div class="t" style="left:353.625px;top:202.30px;width:200px;height:14.40px;line-height:14.40px;text-align:center;font-size:12px;color:#333">G</div>
<div class="t" style="left:417.875px;top:202.30px;width:200px;height:14.40px;line-height:14.40px;text-align:center;font-size:12px;color:#333">H</div>
<div class="t" style="left:482.125px;top:202.30px;width:200px;height:14.40px;line-height:14.40px;text-align:center;font-size:12px;color:#333">I</div>
<div class="t" style="left:546.375px;top:202.30px;width:200px;height:14.40px;line-height:14.40px;text-align:center;font-size:12px;color:#333">J</div>
<div class="t" style="left:610.625px;top:202.30px;width:200px;height:14.40px;line-height:14.40px;text-align:center;font-size:12px;color:#333">K</div>
<div class="t" style="left:674.875px;top:202.30px;width:200px;height:14.40px;line-height:14.40px;text-align:center;font-size:12px;color:#333">L</div>
<div class="t" style="left:739.125px;top:202.30px;width:200px;height:14.40px;line-height:14.40px;text-align:center;font-size:12px;color:#333">M</div>
<svg class="a" style="left:83px;top:208px;" width="14" height="3" viewBox="0 0 14 3"><circle cx="1.5" cy="1.5" r="1.2" fill="#333"/><circle cx="6" cy="1.5" r="1.2" fill="#333"/><circle cx="10.5" cy="1.5" r="1.2" fill="#333"/></svg>
<svg class="a" style="left:14px;top:204px;" width="8" height="8" viewBox="0 0 8 8"><path d="M7.5 0.5V7.5H0.5Z" fill="#555"/></svg>
<div class="t" style="left:-82px;top:220.73px;width:200px;height:14.40px;line-height:14.40px;text-align:center;font-size:12px;color:#333">1</div>
<div class="t" style="left:-82px;top:236.80px;width:200px;height:14.40px;line-height:14.40px;text-align:center;font-size:12px;color:#333">2</div>
<div class="t" style="left:-82px;top:252.86px;width:200px;height:14.40px;line-height:14.40px;text-align:center;font-size:12px;color:#333">3</div>
<div class="t" style="left:-82px;top:268.93px;width:200px;height:14.40px;line-height:14.40px;text-align:center;font-size:12px;color:#333">4</div>
<div class="t" style="left:-82px;top:284.99px;width:200px;height:14.40px;line-height:14.40px;text-align:center;font-size:12px;color:#333">5</div>
<div class="t" style="left:-82px;top:301.06px;width:200px;height:14.40px;line-height:14.40px;text-align:center;font-size:12px;color:#333">6</div>
<div class="t" style="left:-82px;top:317.12px;width:200px;height:14.40px;line-height:14.40px;text-align:center;font-size:12px;color:#333">7</div>
<div class="t" style="left:-82px;top:333.19px;width:200px;height:14.40px;line-height:14.40px;text-align:center;font-size:12px;color:#333">8</div>
<div class="t" style="left:-82px;top:349.25px;width:200px;height:14.40px;line-height:14.40px;text-align:center;font-size:12px;color:#333">9</div>
<div class="t" style="left:-82px;top:365.32px;width:200px;height:14.40px;line-height:14.40px;text-align:center;font-size:12px;color:#333">10</div>
<div class="t" style="left:-82px;top:381.38px;width:200px;height:14.40px;line-height:14.40px;text-align:center;font-size:12px;color:#333">11</div>
<div class="t" style="left:-82px;top:397.45px;width:200px;height:14.40px;line-height:14.40px;text-align:center;font-size:12px;color:#333">12</div>
<div class="t" style="left:-82px;top:413.51px;width:200px;height:14.40px;line-height:14.40px;text-align:center;font-size:12px;color:#333">13</div>
<div class="t" style="left:-82px;top:429.58px;width:200px;height:14.40px;line-height:14.40px;text-align:center;font-size:12px;color:#333">14</div>
<div class="t" style="left:-82px;top:445.64px;width:200px;height:14.40px;line-height:14.40px;text-align:center;font-size:12px;color:#333">15</div>
<div class="t" style="left:-82px;top:461.71px;width:200px;height:14.40px;line-height:14.40px;text-align:center;font-size:12px;color:#333">16</div>
<div class="t" style="left:-82px;top:477.77px;width:200px;height:14.40px;line-height:14.40px;text-align:center;font-size:12px;color:#333">17</div>
<div class="t" style="left:-82px;top:493.84px;width:200px;height:14.40px;line-height:14.40px;text-align:center;font-size:12px;color:#333">18</div>
<div class="t" style="left:-82px;top:509.90px;width:200px;height:14.40px;line-height:14.40px;text-align:center;font-size:12px;color:#333">19</div>
<div class="t" style="left:-82px;top:525.97px;width:200px;height:14.40px;line-height:14.40px;text-align:center;font-size:12px;color:#333">20</div>
<div class="t" style="left:-82px;top:542.03px;width:200px;height:14.40px;line-height:14.40px;text-align:center;font-size:12px;color:#333">21</div>
<div class="t" style="left:-82px;top:558.10px;width:200px;height:14.40px;line-height:14.40px;text-align:center;font-size:12px;color:#333">22</div>
<div class="t" style="left:-82px;top:574.16px;width:200px;height:14.40px;line-height:14.40px;text-align:center;font-size:12px;color:#333">23</div>
<div class="t" style="left:-82px;top:590.23px;width:200px;height:14.40px;line-height:14.40px;text-align:center;font-size:12px;color:#333">24</div>
<div class="t" style="left:-82px;top:606.29px;width:200px;height:14.40px;line-height:14.40px;text-align:center;font-size:12px;color:#333">25</div>
<div class="t" style="left:-82px;top:622.36px;width:200px;height:14.40px;line-height:14.40px;text-align:center;font-size:12px;color:#333">26</div>
<div class="t" style="left:-82px;top:638.42px;width:200px;height:14.40px;line-height:14.40px;text-align:center;font-size:12px;color:#333">27</div>
<div class="t" style="left:-82px;top:654.49px;width:200px;height:14.40px;line-height:14.40px;text-align:center;font-size:12px;color:#333">28</div>
<div class="t" style="left:-82px;top:670.55px;width:200px;height:14.40px;line-height:14.40px;text-align:center;font-size:12px;color:#333">29</div>
<div class="t" style="left:-82px;top:686.62px;width:200px;height:14.40px;line-height:14.40px;text-align:center;font-size:12px;color:#333">30</div>
<div class="t" style="left:-82px;top:702.68px;width:200px;height:14.40px;line-height:14.40px;text-align:center;font-size:12px;color:#333">31</div>
<div class="t" style="left:-82px;top:718.75px;width:200px;height:14.40px;line-height:14.40px;text-align:center;font-size:12px;color:#333">32</div>
<div class="t" style="left:-82px;top:734.81px;width:200px;height:14.40px;line-height:14.40px;text-align:center;font-size:12px;color:#333">33</div>
<div class="t" style="left:-82px;top:750.88px;width:200px;height:14.40px;line-height:14.40px;text-align:center;font-size:12px;color:#333">34</div>
<div class="t" style="left:-82px;top:766.94px;width:200px;height:14.40px;line-height:14.40px;text-align:center;font-size:12px;color:#333">35</div>
<div class="t" style="left:-82px;top:783.01px;width:200px;height:14.40px;line-height:14.40px;text-align:center;font-size:12px;color:#333">36</div>
<div class="t" style="left:-82px;top:799.07px;width:200px;height:14.40px;line-height:14.40px;text-align:center;font-size:12px;color:#333">37</div>
<div class="t" style="left:-82px;top:815.14px;width:200px;height:14.40px;line-height:14.40px;text-align:center;font-size:12px;color:#333">38</div>
<div class="t" style="left:-82px;top:831.20px;width:200px;height:14.40px;line-height:14.40px;text-align:center;font-size:12px;color:#333">39</div>
<div class="t" style="left:-82px;top:847.27px;width:200px;height:14.40px;line-height:14.40px;text-align:center;font-size:12px;color:#333">40</div>
<div class="t" style="left:-82px;top:863.33px;width:200px;height:14.40px;line-height:14.40px;text-align:center;font-size:12px;color:#333">41</div>
<svg class="a" style="left:36px;top:220px;" width="832" height="640" viewBox="0 0 832 640"><rect x="0" y="14.97" width="818" height="1" fill="#ebebed"/><rect x="0" y="31.03" width="818" height="1" fill="#ebebed"/><rect x="0" y="47.10" width="818" height="1" fill="#ebebed"/><rect x="0" y="63.16" width="818" height="1" fill="#ebebed"/><rect x="0" y="79.23" width="818" height="1" fill="#ebebed"/><rect x="0" y="95.29" width="818" height="1" fill="#ebebed"/><rect x="0" y="111.36" width="818" height="1" fill="#ebebed"/><rect x="0" y="127.42" width="818" height="1" fill="#ebebed"/><rect x="0" y="143.49" width="818" height="1" fill="#ebebed"/><rect x="0" y="159.55" width="818" height="1" fill="#ebebed"/><rect x="0" y="175.62" width="818" height="1" fill="#ebebed"/><rect x="0" y="191.68" width="818" height="1" fill="#ebebed"/><rect x="0" y="207.75" width="818" height="1" fill="#ebebed"/><rect x="0" y="223.81" width="818" height="1" fill="#ebebed"/><rect x="0" y="239.88" width="818" height="1" fill="#ebebed"/><rect x="0" y="255.94" width="818" height="1" fill="#ebebed"/><rect x="0" y="272.00" width="818" height="1" fill="#ebebed"/><rect x="0" y="288.07" width="818" height="1" fill="#ebebed"/><rect x="0" y="304.13" width="818" height="1" fill="#ebebed"/><rect x="0" y="320.20" width="818" height="1" fill="#ebebed"/><rect x="0" y="336.26" width="818" height="1" fill="#ebebed"/><rect x="0" y="352.33" width="818" height="1" fill="#ebebed"/><rect x="0" y="368.39" width="818" height="1" fill="#ebebed"/><rect x="0" y="384.46" width="818" height="1" fill="#ebebed"/><rect x="0" y="400.53" width="818" height="1" fill="#ebebed"/><rect x="0" y="416.59" width="818" height="1" fill="#ebebed"/><rect x="0" y="432.66" width="818" height="1" fill="#ebebed"/><rect x="0" y="448.72" width="818" height="1" fill="#ebebed"/><rect x="0" y="464.79" width="818" height="1" fill="#ebebed"/><rect x="0" y="480.85" width="818" height="1" fill="#ebebed"/><rect x="0" y="496.92" width="818" height="1" fill="#ebebed"/><rect x="0" y="512.98" width="818" height="1" fill="#ebebed"/><rect x="0" y="529.05" width="818" height="1" fill="#ebebed"/><rect x="0" y="545.11" width="818" height="1" fill="#ebebed"/><rect x="0" y="561.18" width="818" height="1" fill="#ebebed"/><rect x="0" y="577.24" width="818" height="1" fill="#ebebed"/><rect x="0" y="593.31" width="818" height="1" fill="#ebebed"/><rect x="0" y="609.37" width="818" height="1" fill="#ebebed"/><rect x="0" y="625.44" width="818" height="1" fill="#ebebed"/><rect x="0" y="641.50" width="818" height="1" fill="#ebebed"/><rect x="63.75" y="0" width="1" height="640" fill="#ebebed"/><rect x="128.00" y="0" width="1" height="640" fill="#ebebed"/><rect x="192.25" y="0" width="1" height="640" fill="#ebebed"/><rect x="256.50" y="0" width="1" height="640" fill="#ebebed"/><rect x="320.75" y="0" width="1" height="640" fill="#ebebed"/><rect x="385.00" y="0" width="1" height="640" fill="#ebebed"/><rect x="449.25" y="0" width="1" height="640" fill="#ebebed"/><rect x="513.50" y="0" width="1" height="640" fill="#ebebed"/><rect x="577.75" y="0" width="1" height="640" fill="#ebebed"/><rect x="642.00" y="0" width="1" height="640" fill="#ebebed"/><rect x="706.25" y="0" width="1" height="640" fill="#ebebed"/><rect x="770.50" y="0" width="1" height="640" fill="#ebebed"/></svg>
<div class="a" style="left:36.5px;top:220px;width:64px;height:128.6px;background:rgba(95,115,210,0.2)"></div>
<div class="a" style="left:100.25px;top:220px;width:65px;height:128.6px;background:rgba(115,145,95,0.2)"></div>
<div class="a" style="left:36px;top:219.5px;width:64.5px;height:1.5px;background:#8a9ad6"></div>
<div class="a" style="left:36px;top:219.5px;width:1.5px;height:129px;background:#7a8fd6"></div>
<div class="a" style="left:36px;top:347.5px;width:64.5px;height:1.5px;background:#7a8fd6"></div>
<div class="a" style="left:36px;top:219px;width:3px;height:3px;background:#3a5bd0"></div>
<div class="a" style="left:99.5px;top:219.5px;width:66.5px;height:2px;background:#6f9a5d"></div>
<div class="a" style="left:99.5px;top:219.5px;width:2px;height:129.5px;background:#6f9a5d"></div>
<div class="a" style="left:164px;top:219.5px;width:2px;height:129.5px;background:#6f9a5d"></div>
<div class="a" style="left:99.5px;top:347.5px;width:66.5px;height:2px;background:#6f9a5d"></div>
<div class="a" style="left:98.75px;top:218.75px;width:3.5px;height:3.5px;background:#6f9a5d"></div>
<div class="a" style="left:163.25px;top:218.75px;width:3.5px;height:3.5px;background:#6f9a5d"></div>
<div class="a" style="left:98.75px;top:346.75px;width:3.5px;height:3.5px;background:#6f9a5d"></div>
<div class="a" style="left:163.25px;top:346.75px;width:3.5px;height:3.5px;background:#6f9a5d"></div>
<div class="a" style="left:36px;top:346px;width:3px;height:3px;background:#3a5bd0"></div>
<div class="t" style="left:37.5px;top:220.63px;width:62.5px;height:16px;line-height:16px;font-size:12.8px;color:#111;overflow:hidden;font-family:'Liberation Serif',serif">冰箱</div>
<div class="t" style="left:100px;top:219.93px;width:61.5px;height:16px;line-height:16px;font-size:14px;color:#111;text-align:right;font-family:'Liberation Serif',serif">240</div>
<div class="t" style="left:37.5px;top:236.70px;width:62.5px;height:16px;line-height:16px;font-size:12.8px;color:#111;overflow:hidden;font-family:'Liberation Serif',serif">小家电</div>
<div class="t" style="left:100px;top:236.00px;width:61.5px;height:16px;line-height:16px;font-size:14px;color:#111;text-align:right;font-family:'Liberation Serif',serif">62</div>
<div class="t" style="left:37.5px;top:252.76px;width:62.5px;height:16px;line-height:16px;font-size:12.8px;color:#111;overflow:hidden;font-family:'Liberation Serif',serif">手机</div>
<div class="t" style="left:100px;top:252.06px;width:61.5px;height:16px;line-height:16px;font-size:14px;color:#111;text-align:right;font-family:'Liberation Serif',serif">12</div>
<div class="t" style="left:37.5px;top:268.83px;width:62.5px;height:16px;line-height:16px;font-size:12.8px;color:#111;overflow:hidden;font-family:'Liberation Serif',serif">洗衣机</div>
<div class="t" style="left:100px;top:268.13px;width:61.5px;height:16px;line-height:16px;font-size:14px;color:#111;text-align:right;font-family:'Liberation Serif',serif">195</div>
<div class="t" style="left:37.5px;top:284.89px;width:62.5px;height:16px;line-height:16px;font-size:12.8px;color:#111;overflow:hidden;font-family:'Liberation Serif',serif">烟灶消</div>
<div class="t" style="left:100px;top:284.19px;width:61.5px;height:16px;line-height:16px;font-size:14px;color:#111;text-align:right;font-family:'Liberation Serif',serif">82</div>
<div class="t" style="left:37.5px;top:300.96px;width:62.5px;height:16px;line-height:16px;font-size:12.8px;color:#111;overflow:hidden;font-family:'Liberation Serif',serif">电视</div>
<div class="t" style="left:100px;top:300.26px;width:61.5px;height:16px;line-height:16px;font-size:14px;color:#111;text-align:right;font-family:'Liberation Serif',serif">181</div>
<div class="t" style="left:37.5px;top:317.02px;width:62.5px;height:16px;line-height:16px;font-size:12.8px;color:#111;overflow:hidden;font-family:'Liberation Serif',serif">空调</div>
<div class="t" style="left:100px;top:316.32px;width:61.5px;height:16px;line-height:16px;font-size:14px;color:#111;text-align:right;font-family:'Liberation Serif',serif">172</div>
<div class="t" style="left:37.5px;top:333.09px;width:62.5px;height:16px;line-height:16px;font-size:12.8px;color:#111;overflow:hidden;font-family:'Liberation Serif',serif">笔记本电脑</div>
<div class="t" style="left:100px;top:332.39px;width:61.5px;height:16px;line-height:16px;font-size:14px;color:#111;text-align:right;font-family:'Liberation Serif',serif">34</div>
<div class="a" style="left:183.5px;top:264.5px;width:557.0px;height:399.5px;background:#fff"></div>
<svg class="a" style="left:183.5px;top:264.5px;" width="557.0" height="399.5" viewBox="0 0 557.0 399.5"><rect x="35.35" y="371.00" width="508.80" height="1.1" fill="#dcdcdc"/><rect x="35.35" y="316.72" width="508.80" height="1.1" fill="#dcdcdc"/><rect x="35.35" y="262.44" width="508.80" height="1.1" fill="#dcdcdc"/><rect x="35.35" y="208.16" width="508.80" height="1.1" fill="#dcdcdc"/><rect x="35.35" y="153.88" width="508.80" height="1.1" fill="#dcdcdc"/><rect x="35.35" y="99.60" width="508.80" height="1.1" fill="#dcdcdc"/><rect x="35.35" y="45.32" width="508.80" height="1.1" fill="#dcdcdc"/></svg>
<div class="t" style="left:12px;top:629.28px;width:200px;height:13.44px;line-height:13.44px;text-align:right;font-size:11.2px;color:#595959">0</div>
<div class="t" style="left:12px;top:575.00px;width:200px;height:13.44px;line-height:13.44px;text-align:right;font-size:11.2px;color:#595959">50</div>
<div class="t" style="left:12px;top:520.72px;width:200px;height:13.44px;line-height:13.44px;text-align:right;font-size:11.2px;color:#595959">100</div>
<div class="t" style="left:12px;top:466.44px;width:200px;height:13.44px;line-height:13.44px;text-align:right;font-size:11.2px;color:#595959">150</div>
<div class="t" style="left:12px;top:412.16px;width:200px;height:13.44px;line-height:13.44px;text-align:right;font-size:11.2px;color:#595959">200</div>
<div class="t" style="left:12px;top:357.88px;width:200px;height:13.44px;line-height:13.44px;text-align:right;font-size:11.2px;color:#595959">250</div>
<div class="t" style="left:12px;top:303.60px;width:200px;height:13.44px;line-height:13.44px;text-align:right;font-size:11.2px;color:#595959">300</div>
<div class="a" style="left:240.9px;top:375.46px;width:19.5px;height:260.54px;background:#6a9bd0"></div>
<div class="t" style="left:150.64999999999998px;top:643.20px;width:200px;height:13.20px;line-height:13.20px;text-align:center;font-size:11px;color:#595959">冰箱</div>
<div class="a" style="left:304.5px;top:568.69px;width:19.5px;height:67.31px;background:#6a9bd0"></div>
<div class="t" style="left:214.25px;top:643.20px;width:200px;height:13.20px;line-height:13.20px;text-align:center;font-size:11px;color:#595959">小家电</div>
<div class="a" style="left:368.1px;top:622.97px;width:19.5px;height:13.03px;background:#6a9bd0"></div>
<div class="t" style="left:277.85px;top:643.20px;width:200px;height:13.20px;line-height:13.20px;text-align:center;font-size:11px;color:#595959">手机</div>
<div class="a" style="left:431.7px;top:424.31px;width:19.5px;height:211.69px;background:#6a9bd0"></div>
<div class="t" style="left:341.44999999999993px;top:643.20px;width:200px;height:13.20px;line-height:13.20px;text-align:center;font-size:11px;color:#595959">洗衣机</div>
<div class="a" style="left:495.3px;top:546.98px;width:19.5px;height:89.02px;background:#6a9bd0"></div>
<div class="t" style="left:405.04999999999995px;top:643.20px;width:200px;height:13.20px;line-height:13.20px;text-align:center;font-size:11px;color:#595959">烟灶消</div>
<div class="a" style="left:558.9px;top:439.51px;width:19.5px;height:196.49px;background:#6a9bd0"></div>
<div class="t" style="left:468.65px;top:643.20px;width:200px;height:13.20px;line-height:13.20px;text-align:center;font-size:11px;color:#595959">电视</div>
<div class="a" style="left:622.5px;top:449.28px;width:19.5px;height:186.72px;background:#6a9bd0"></div>
<div class="t" style="left:532.25px;top:643.20px;width:200px;height:13.20px;line-height:13.20px;text-align:center;font-size:11px;color:#595959">空调</div>
<div class="a" style="left:686.1px;top:599.09px;width:19.5px;height:36.91px;background:#6a9bd0"></div>
<div class="t" style="left:595.8499999999999px;top:643.20px;width:200px;height:13.20px;line-height:13.20px;text-align:center;font-size:11px;color:#595959">笔记本电脑</div>
<div class="t" style="left:362.5px;top:274.04px;width:200px;height:19.92px;line-height:19.92px;text-align:center;font-size:16.6px;color:#555">图表标题</div>
<div class="a" style="left:182.75px;top:263.75px;width:558.5px;height:401.0px;border:1.5px solid #5ca061"></div>
<div class="a" style="left:179.5px;top:260.5px;width:8px;height:8px;background:#3f9a4c;border:1.5px solid #fff;border-radius:50%;box-shadow:0 0 0.8px rgba(0,0,0,.35)"></div>
<div class="a" style="left:179.5px;top:460.25px;width:8px;height:8px;background:#3f9a4c;border:1.5px solid #fff;border-radius:50%;box-shadow:0 0 0.8px rgba(0,0,0,.35)"></div>
<div class="a" style="left:179.5px;top:660px;width:8px;height:8px;background:#3f9a4c;border:1.5px solid #fff;border-radius:50%;box-shadow:0 0 0.8px rgba(0,0,0,.35)"></div>
<div class="a" style="left:458.0px;top:260.5px;width:8px;height:8px;background:#3f9a4c;border:1.5px solid #fff;border-radius:50%;box-shadow:0 0 0.8px rgba(0,0,0,.35)"></div>
<div class="a" style="left:458.0px;top:660px;width:8px;height:8px;background:#3f9a4c;border:1.5px solid #fff;border-radius:50%;box-shadow:0 0 0.8px rgba(0,0,0,.35)"></div>
<div class="a" style="left:736.5px;top:260.5px;width:8px;height:8px;background:#3f9a4c;border:1.5px solid #fff;border-radius:50%;box-shadow:0 0 0.8px rgba(0,0,0,.35)"></div>
<div class="a" style="left:736.5px;top:460.25px;width:8px;height:8px;background:#3f9a4c;border:1.5px solid #fff;border-radius:50%;box-shadow:0 0 0.8px rgba(0,0,0,.35)"></div>
<div class="a" style="left:736.5px;top:660px;width:8px;height:8px;background:#3f9a4c;border:1.5px solid #fff;border-radius:50%;box-shadow:0 0 0.8px rgba(0,0,0,.35)"></div>
<div class="a" style="left:750px;top:264.3px;width:24.5px;height:24.5px;background:#fff;border:1px solid #d6d6d6;border-radius:6px"></div>
<svg class="a" style="left:755px;top:269.3px;" width="14" height="14" viewBox="0 0 14 14"><rect x="1.5" y="4.2" width="3" height="9.3" rx="1.2" fill="#a0a0a0" stroke="#333" stroke-width="1"/><rect x="5.6" y="1.5" width="2.5" height="12" rx="1" fill="none" stroke="#333" stroke-width="1"/><path d="M10.3 7.3H13M10.3 9.7H13M10.3 12.2H13" fill="none" stroke="#333" stroke-width="1" stroke-linecap="round" stroke-linejoin="round" /></svg>
<div class="a" style="left:750px;top:296.5px;width:24.5px;height:24.5px;background:#fff;border:1px solid #d6d6d6;border-radius:6px"></div>
<svg class="a" style="left:755px;top:301.5px;" width="14" height="14" viewBox="0 0 14 14"><path d="M2.5 12L3 9L9.8 2.2A1.6 1.6 0 0 1 12 4.4L5.2 11.2Z M8.6 3.4L10.8 5.6" fill="none" stroke="#333" stroke-width="1.2" stroke-linecap="round" stroke-linejoin="round" /></svg>
<div class="a" style="left:750px;top:328.7px;width:24.5px;height:24.5px;background:#fff;border:1px solid #d6d6d6;border-radius:6px"></div>
<svg class="a" style="left:755px;top:333.7px;" width="14" height="14" viewBox="0 0 14 14"><path d="M1.5 12.5V6H5V12.5ZM5 12.5H8V1.5H11.5" fill="none" stroke="#333" stroke-width="1.1" stroke-linecap="round" stroke-linejoin="round" /><circle cx="11.5" cy="10.4" r="1.8" fill="none" stroke="#333" stroke-width="1.3"/></svg>
<div class="a" style="left:750px;top:361px;width:24.5px;height:24.5px;background:#fff;border:1px solid #d6d6d6;border-radius:6px"></div>
<svg class="a" style="left:755px;top:366px;" width="14" height="14" viewBox="0 0 14 14"><circle cx="7" cy="7" r="2" fill="none" stroke="#333" stroke-width="1.2"/><path d="M6 1H8L8.5 2.7L10.2 1.9L11.7 3.4L10.9 5.1L12.7 5.7V7.9L10.9 8.5L11.7 10.2L10.2 11.7L8.5 10.9L8 12.7H6L5.5 10.9L3.8 11.7L2.3 10.2L3.1 8.5L1.3 7.9V5.7L3.1 5.1L2.3 3.4L3.8 1.9L5.5 2.7Z" fill="none" stroke="#333" stroke-width="1.1" stroke-linecap="round" stroke-linejoin="round" /></svg>
<svg class="a" style="left:857px;top:224.5px;" width="7" height="5" viewBox="0 0 7 5"><path d="M0.5 4.5L3.5 0.5L6.5 4.5Z" fill="#555"/></svg>
<div class="a" style="left:858px;top:234px;width:4.5px;height:573px;background:#d6d6d6;border-radius:2.5px"></div>
<svg class="a" style="left:857px;top:851px;" width="7" height="5" viewBox="0 0 7 5"><path d="M0.5 0.5L3.5 4.5L6.5 0.5Z" fill="#555"/></svg>
<svg class="a" style="left:40px;top:863px;" width="6" height="8" viewBox="0 0 6 8"><path d="M5.5 0.5V7.5L0.5 4Z" fill="#666"/></svg>
<div class="a" style="left:50px;top:864.5px;width:713px;height:5.5px;background:#d9d9d9;border-radius:3px"></div>
<svg class="a" style="left:843px;top:863px;" width="6" height="8" viewBox="0 0 6 8"><path d="M0.5 0.5V7.5L5.5 4Z" fill="#666"/></svg>
<div class="t" style="left:34px;top:226px;width:100px;height:16px;line-height:16px;text-align:center;font-size:13px;color:rgba(0,0,0,0.12);transform:rotate(20deg)">阿牙/2629</div>
<div class="t" style="left:203px;top:226px;width:100px;height:16px;line-height:16px;text-align:center;font-size:13px;color:rgba(0,0,0,0.12);transform:rotate(20deg)">阿牙/2629</div>
<div class="t" style="left:372px;top:226px;width:100px;height:16px;line-height:16px;text-align:center;font-size:13px;color:rgba(0,0,0,0.12);transform:rotate(20deg)">阿牙/2629</div>
<div class="t" style="left:540px;top:226px;width:100px;height:16px;line-height:16px;text-align:center;font-size:13px;color:rgba(0,0,0,0.12);transform:rotate(20deg)">阿牙/2629</div>
<div class="t" style="left:710px;top:226px;width:100px;height:16px;line-height:16px;text-align:center;font-size:13px;color:rgba(0,0,0,0.12);transform:rotate(20deg)">阿牙/2629</div>
<div class="t" style="left:34px;top:367px;width:100px;height:16px;line-height:16px;text-align:center;font-size:13px;color:rgba(0,0,0,0.12);transform:rotate(20deg)">阿牙/2629</div>
<div class="t" style="left:203px;top:367px;width:100px;height:16px;line-height:16px;text-align:center;font-size:13px;color:rgba(0,0,0,0.12);transform:rotate(20deg)">阿牙/2629</div>
<div class="t" style="left:372px;top:367px;width:100px;height:16px;line-height:16px;text-align:center;font-size:13px;color:rgba(0,0,0,0.12);transform:rotate(20deg)">阿牙/2629</div>
<div class="t" style="left:540px;top:367px;width:100px;height:16px;line-height:16px;text-align:center;font-size:13px;color:rgba(0,0,0,0.12);transform:rotate(20deg)">阿牙/2629</div>
<div class="t" style="left:710px;top:367px;width:100px;height:16px;line-height:16px;text-align:center;font-size:13px;color:rgba(0,0,0,0.12);transform:rotate(20deg)">阿牙/2629</div>
<div class="t" style="left:34px;top:510px;width:100px;height:16px;line-height:16px;text-align:center;font-size:13px;color:rgba(0,0,0,0.12);transform:rotate(20deg)">阿牙/2629</div>
<div class="t" style="left:203px;top:510px;width:100px;height:16px;line-height:16px;text-align:center;font-size:13px;color:rgba(0,0,0,0.12);transform:rotate(20deg)">阿牙/2629</div>
<div class="t" style="left:372px;top:510px;width:100px;height:16px;line-height:16px;text-align:center;font-size:13px;color:rgba(0,0,0,0.12);transform:rotate(20deg)">阿牙/2629</div>
<div class="t" style="left:540px;top:510px;width:100px;height:16px;line-height:16px;text-align:center;font-size:13px;color:rgba(0,0,0,0.12);transform:rotate(20deg)">阿牙/2629</div>
<div class="t" style="left:710px;top:510px;width:100px;height:16px;line-height:16px;text-align:center;font-size:13px;color:rgba(0,0,0,0.12);transform:rotate(20deg)">阿牙/2629</div>
<div class="t" style="left:34px;top:652px;width:100px;height:16px;line-height:16px;text-align:center;font-size:13px;color:rgba(0,0,0,0.12);transform:rotate(20deg)">阿牙/2629</div>
<div class="t" style="left:203px;top:652px;width:100px;height:16px;line-height:16px;text-align:center;font-size:13px;color:rgba(0,0,0,0.12);transform:rotate(20deg)">阿牙/2629</div>
<div class="t" style="left:372px;top:652px;width:100px;height:16px;line-height:16px;text-align:center;font-size:13px;color:rgba(0,0,0,0.12);transform:rotate(20deg)">阿牙/2629</div>
<div class="t" style="left:540px;top:652px;width:100px;height:16px;line-height:16px;text-align:center;font-size:13px;color:rgba(0,0,0,0.12);transform:rotate(20deg)">阿牙/2629</div>
<div class="t" style="left:710px;top:652px;width:100px;height:16px;line-height:16px;text-align:center;font-size:13px;color:rgba(0,0,0,0.12);transform:rotate(20deg)">阿牙/2629</div>
<div class="t" style="left:34px;top:795px;width:100px;height:16px;line-height:16px;text-align:center;font-size:13px;color:rgba(0,0,0,0.12);transform:rotate(20deg)">阿牙/2629</div>
<div class="t" style="left:203px;top:795px;width:100px;height:16px;line-height:16px;text-align:center;font-size:13px;color:rgba(0,0,0,0.12);transform:rotate(20deg)">阿牙/2629</div>
<div class="t" style="left:372px;top:795px;width:100px;height:16px;line-height:16px;text-align:center;font-size:13px;color:rgba(0,0,0,0.12);transform:rotate(20deg)">阿牙/2629</div>
<div class="t" style="left:540px;top:795px;width:100px;height:16px;line-height:16px;text-align:center;font-size:13px;color:rgba(0,0,0,0.12);transform:rotate(20deg)">阿牙/2629</div>
<div class="t" style="left:710px;top:795px;width:100px;height:16px;line-height:16px;text-align:center;font-size:13px;color:rgba(0,0,0,0.12);transform:rotate(20deg)">阿牙/2629</div>
<div class="t" style="left:51px;top:883.70px;height:15.60px;line-height:15.60px;font-size:13px;color:#5a5a5a">Sheet1</div>
<div class="a" style="left:109px;top:879px;width:70.5px;height:24.5px;background:#fff;border-radius:6px;box-shadow:0 0.5px 1.5px rgba(0,0,0,0.08)"></div>
<div class="t" style="left:44px;top:883.70px;width:200px;height:15.60px;line-height:15.60px;text-align:center;font-size:13px;color:#2a7a49;font-weight:bold">Sheet2</div>
<svg class="a" style="left:204px;top:885px;" width="13" height="13" viewBox="0 0 13 13"><path d="M6.5 1V12M1 6.5H12" fill="none" stroke="#555" stroke-width="1.3" stroke-linecap="round" stroke-linejoin="round" /></svg>
<div class="a" style="left:1434px;top:78px;width:6px;height:830px;background:#ebebeb"></div>
<div class="a" style="left:874.5px;top:158.5px;width:559px;height:717px;background:#f5f5f5;border:1px solid #e3e3e3;border-radius:10px"></div>
<div class="t" style="left:893.5px;top:178.60px;height:16.80px;line-height:16.80px;font-size:14px;color:#1f1f1f;font-weight:bold">AI 数据分析</div>
<div class="a" style="left:977.5px;top:178px;width:35.5px;height:17.5px;background:#ebe6f9;border-radius:4px"></div>
<div class="t" style="left:895.3px;top:180.20px;width:200px;height:13.20px;line-height:13.20px;text-align:center;font-size:11px;color:#9b6cf2">限免</div>
<svg class="a" style="left:1366px;top:178px;" width="16" height="16" viewBox="0 0 16 16"><circle cx="8" cy="8" r="6.8" fill="none" stroke="#c4c4c4" stroke-width="1.1"/><path d="M7.5 4.5V8.5H10.5" fill="none" stroke="#c4c4c4" stroke-width="1.1" stroke-linecap="round" stroke-linejoin="round" /></svg>
<svg class="a" style="left:1396.5px;top:180.5px;" width="11" height="11" viewBox="0 0 11 11"><path d="M0.5 0.5L10.5 10.5M10.5 0.5L0.5 10.5" fill="none" stroke="#444" stroke-width="1.4" stroke-linecap="round" stroke-linejoin="round" /></svg>
<div class="a" style="left:876px;top:244px;width:557px;height:475px;overflow:hidden">
<div class="a" style="left:57.00px;top:-144.00px;width:472.50px;height:316.00px;background:#fff;border-radius:8px"></div>
<svg class="a" style="left:0;top:0" width="557" height="475"><rect x="129.50" y="90.50" width="376.50" height="1" fill="#eeeef3"/><rect x="129.50" y="45.70" width="376.50" height="1" fill="#eeeef3"/><rect x="129.50" y="0.90" width="376.50" height="1" fill="#eeeef3"/><rect x="254.50" y="-9.00" width="1" height="100" fill="#e6e6ef"/><rect x="380.00" y="-9.00" width="1" height="100" fill="#e6e6ef"/><rect x="505.50" y="-9.00" width="1" height="100" fill="#e6e6ef"/></svg>
<div class="a" style="left:142.00px;top:-94.00px;width:100.50px;height:185.00px;background:#67ab5b"></div>
<div class="a" style="left:267.30px;top:-94.00px;width:100.50px;height:185.00px;background:#67ab5b"></div>
<div class="a" style="left:392.80px;top:44.77px;width:100.50px;height:46.23px;background:#67ab5b"></div>
<div class="a" style="left:129.00px;top:-94.00px;width:1.00px;height:186.00px;background:#8d94a2"></div>
<div class="a" style="left:129.00px;top:91.00px;width:378.00px;height:1.00px;background:#8d94a2"></div>
<div class="a" style="left:129.00px;top:92.00px;width:1.00px;height:4.00px;background:#8d94a2"></div>
<div class="a" style="left:255.00px;top:92.00px;width:1.00px;height:4.00px;background:#8d94a2"></div>
<div class="a" style="left:380.00px;top:92.00px;width:1.00px;height:4.00px;background:#8d94a2"></div>
<div class="a" style="left:506.00px;top:92.00px;width:1.00px;height:4.00px;background:#8d94a2"></div>
<div class="t" style="left:-78.50px;top:85.28px;width:200px;height:13.44px;line-height:13.44px;text-align:right;font-size:11.2px;color:#6e7079">0</div>
<div class="t" style="left:-78.50px;top:40.48px;width:200px;height:13.44px;line-height:13.44px;text-align:right;font-size:11.2px;color:#6e7079">50,000</div>
<div class="t" style="left:-78.50px;top:-4.32px;width:200px;height:13.44px;line-height:13.44px;text-align:right;font-size:11.2px;color:#6e7079">100,000</div>
<div class="t" style="left:342.70px;top:60.90px;width:200px;height:13.20px;line-height:13.20px;text-align:center;font-size:11px;color:#222">51600</div>
<div class="t" style="left:102.70px;top:97.90px;width:200px;height:13.20px;line-height:13.20px;text-align:center;font-size:11px;color:#6e7079">福田</div>
<div class="t" style="left:227.50px;top:97.90px;width:200px;height:13.20px;line-height:13.20px;text-align:center;font-size:11px;color:#6e7079">罗湖</div>
<div class="t" style="left:353.00px;top:97.90px;width:200px;height:13.20px;line-height:13.20px;text-align:center;font-size:11px;color:#6e7079">龙华</div>
<div class="a" style="left:258.00px;top:149.00px;width:22.50px;height:12.50px;background:#67ab5b;border-radius:3px"></div>
<div class="t" style="left:285.00px;top:148.70px;height:13.20px;line-height:13.20px;font-size:11px;color:#333">销售利润</div>
<div class="a" style="left:57.00px;top:179.00px;width:472.50px;height:400.00px;background:#fff;border-radius:8px"></div>
<svg class="a" style="left:0;top:0" width="557" height="475"><rect x="107.00" y="464.50" width="399.2" height="1" fill="#f0f0f4"/><rect x="107.00" y="418.30" width="399.2" height="1" fill="#f0f0f4"/><rect x="107.00" y="372.10" width="399.2" height="1" fill="#f0f0f4"/><rect x="107.00" y="325.90" width="399.2" height="1" fill="#f0f0f4"/><rect x="107.00" y="279.70" width="399.2" height="1" fill="#f0f0f4"/><rect x="107.00" y="233.50" width="399.2" height="1" fill="#f0f0f4"/><rect x="156.40" y="234.00" width="1" height="231.00" fill="#e6e6ef"/><rect x="206.30" y="234.00" width="1" height="231.00" fill="#e6e6ef"/><rect x="256.20" y="234.00" width="1" height="231.00" fill="#e6e6ef"/><rect x="306.10" y="234.00" width="1" height="231.00" fill="#e6e6ef"/><rect x="356.00" y="234.00" width="1" height="231.00" fill="#e6e6ef"/><rect x="405.90" y="234.00" width="1" height="231.00" fill="#e6e6ef"/><rect x="455.80" y="234.00" width="1" height="231.00" fill="#e6e6ef"/><rect x="505.70" y="234.00" width="1" height="231.00" fill="#e6e6ef"/></svg>
<div class="a" style="left:112.00px;top:243.24px;width:39.60px;height:221.76px;background:#f09e3a"></div>
<div class="t" style="left:32.00px;top:347.52px;width:200px;height:13.20px;line-height:13.20px;text-align:center;font-size:11px;color:#222">240</div>
<div class="a" style="left:161.90px;top:407.71px;width:39.60px;height:57.29px;background:#f09e3a"></div>
<div class="t" style="left:81.90px;top:429.76px;width:200px;height:13.20px;line-height:13.20px;text-align:center;font-size:11px;color:#222">62</div>
<div class="a" style="left:211.80px;top:453.91px;width:39.60px;height:11.09px;background:#f09e3a"></div>
<div class="t" style="left:131.80px;top:452.86px;width:200px;height:13.20px;line-height:13.20px;text-align:center;font-size:11px;color:#222">12</div>
<div class="a" style="left:261.70px;top:284.82px;width:39.60px;height:180.18px;background:#f09e3a"></div>
<div class="t" style="left:181.70px;top:368.31px;width:200px;height:13.20px;line-height:13.20px;text-align:center;font-size:11px;color:#222">195</div>
<div class="a" style="left:311.60px;top:389.23px;width:39.60px;height:75.77px;background:#f09e3a"></div>
<div class="t" style="left:231.60px;top:420.52px;width:200px;height:13.20px;line-height:13.20px;text-align:center;font-size:11px;color:#222">82</div>
<div class="a" style="left:361.50px;top:297.76px;width:39.60px;height:167.24px;background:#f09e3a"></div>
<div class="t" style="left:281.50px;top:374.78px;width:200px;height:13.20px;line-height:13.20px;text-align:center;font-size:11px;color:#222">181</div>
<div class="a" style="left:411.40px;top:306.07px;width:39.60px;height:158.93px;background:#f09e3a"></div>
<div class="t" style="left:331.40px;top:378.94px;width:200px;height:13.20px;line-height:13.20px;text-align:center;font-size:11px;color:#222">172</div>
<div class="a" style="left:461.30px;top:433.58px;width:39.60px;height:31.42px;background:#f09e3a"></div>
<div class="t" style="left:381.30px;top:442.69px;width:200px;height:13.20px;line-height:13.20px;text-align:center;font-size:11px;color:#222">34</div>
<div class="a" style="left:107.00px;top:234.00px;width:1.00px;height:232.00px;background:#8d94a2"></div>
<div class="a" style="left:107.00px;top:465.00px;width:400.00px;height:1.00px;background:#8d94a2"></div>
<div class="a" style="left:107.00px;top:466.00px;width:1.00px;height:4.00px;background:#8d94a2"></div>
<div class="a" style="left:156.00px;top:466.00px;width:1.00px;height:4.00px;background:#8d94a2"></div>
<div class="a" style="left:206.00px;top:466.00px;width:1.00px;height:4.00px;background:#8d94a2"></div>
<div class="a" style="left:256.00px;top:466.00px;width:1.00px;height:4.00px;background:#8d94a2"></div>
<div class="a" style="left:306.00px;top:466.00px;width:1.00px;height:4.00px;background:#8d94a2"></div>
<div class="a" style="left:356.00px;top:466.00px;width:1.00px;height:4.00px;background:#8d94a2"></div>
<div class="a" style="left:406.00px;top:466.00px;width:1.00px;height:4.00px;background:#8d94a2"></div>
<div class="a" style="left:456.00px;top:466.00px;width:1.00px;height:4.00px;background:#8d94a2"></div>
<div class="a" style="left:506.00px;top:466.00px;width:1.00px;height:4.00px;background:#8d94a2"></div>
<div class="t" style="left:-100.00px;top:459.28px;width:200px;height:13.44px;line-height:13.44px;text-align:right;font-size:11.2px;color:#6e7079">0</div>
<div class="t" style="left:-100.00px;top:413.08px;width:200px;height:13.44px;line-height:13.44px;text-align:right;font-size:11.2px;color:#6e7079">50</div>
<div class="t" style="left:-100.00px;top:366.88px;width:200px;height:13.44px;line-height:13.44px;text-align:right;font-size:11.2px;color:#6e7079">100</div>
<div class="t" style="left:-100.00px;top:320.68px;width:200px;height:13.44px;line-height:13.44px;text-align:right;font-size:11.2px;color:#6e7079">150</div>
<div class="t" style="left:-100.00px;top:274.48px;width:200px;height:13.44px;line-height:13.44px;text-align:right;font-size:11.2px;color:#6e7079">200</div>
<div class="t" style="left:-100.00px;top:228.28px;width:200px;height:13.44px;line-height:13.44px;text-align:right;font-size:11.2px;color:#6e7079">250</div>
<div class="t" style="left:78.00px;top:463.50px;width:60px;height:14px;line-height:14px;text-align:right;font-size:11px;color:#6e7079;transform-origin:100% 50%;transform:rotate(-35deg)">冰箱</div>
<div class="t" style="left:127.90px;top:463.50px;width:60px;height:14px;line-height:14px;text-align:right;font-size:11px;color:#6e7079;transform-origin:100% 50%;transform:rotate(-35deg)">小家电</div>
<div class="t" style="left:177.80px;top:463.50px;width:60px;height:14px;line-height:14px;text-align:right;font-size:11px;color:#6e7079;transform-origin:100% 50%;transform:rotate(-35deg)">手机</div>
<div class="t" style="left:227.70px;top:463.50px;width:60px;height:14px;line-height:14px;text-align:right;font-size:11px;color:#6e7079;transform-origin:100% 50%;transform:rotate(-35deg)">洗衣机</div>
<div class="t" style="left:277.60px;top:463.50px;width:60px;height:14px;line-height:14px;text-align:right;font-size:11px;color:#6e7079;transform-origin:100% 50%;transform:rotate(-35deg)">烟灶消</div>
<div class="t" style="left:327.50px;top:463.50px;width:60px;height:14px;line-height:14px;text-align:right;font-size:11px;color:#6e7079;transform-origin:100% 50%;transform:rotate(-35deg)">电视</div>
<div class="t" style="left:377.40px;top:463.50px;width:60px;height:14px;line-height:14px;text-align:right;font-size:11px;color:#6e7079;transform-origin:100% 50%;transform:rotate(-35deg)">空调</div>
<div class="t" style="left:427.30px;top:463.50px;width:60px;height:14px;line-height:14px;text-align:right;font-size:11px;color:#6e7079;transform-origin:100% 50%;transform:rotate(-35deg)">笔记本电脑</div>
</div>
<div class="a" style="left:1425.5px;top:454.5px;width:5px;height:44px;background:#d6d6d6;border-radius:3px"></div>
<div class="a" style="left:1106px;top:743.5px;width:96px;height:26.5px;background:#fff;border-radius:6px;box-shadow:0 1px 3px rgba(0,0,0,0.12);border:1px solid #ececec"></div>
<svg class="a" style="left:1118px;top:749.5px;" width="15" height="15" viewBox="0 0 15 15"><circle cx="7.5" cy="7.5" r="6.3" fill="none" stroke="#333" stroke-width="1.4"/><rect x="4.8" y="4.8" width="5.4" height="5.4" rx="1" fill="#333"/></svg>
<div class="t" style="left:1140px;top:749.50px;height:15.00px;line-height:15.00px;font-size:12.5px;color:#333">停止 Esc</div>
<div class="a" style="left:890.5px;top:786.5px;width:36px;height:36px;background:#fff;border-radius:50%;border:1px solid #e6e6e6"></div>
<svg class="a" style="left:900.5px;top:796.5px;" width="16" height="16" viewBox="0 0 16 16"><path d="M13.5 7A6 5.5 0 1 0 7.5 12.8L4.5 14L5 11.5" fill="none" stroke="#222" stroke-width="1.4" stroke-linecap="round" stroke-linejoin="round" /><path d="M12 10V15M9.5 12.5H14.5" fill="none" stroke="#222" stroke-width="1.4" stroke-linecap="round" stroke-linejoin="round" /></svg>
<div class="a" style="left:934.5px;top:786px;width:484px;height:74px;background:#fff;border:1px solid #e2e2e2;border-radius:10px"></div>
<div class="t" style="left:945px;top:798.50px;height:15.00px;line-height:15.00px;font-size:12.5px;color:#9a9a9a">正在分析中...</div>
<div class="a" style="left:944.5px;top:826px;width:83.5px;height:24.5px;background:#efeafd;border:1px solid #e3dafa;border-radius:6px"></div>
<svg class="a" style="left:952px;top:831px;" width="15" height="15" viewBox="0 0 15 15"><ellipse cx="7.5" cy="7" rx="6.3" ry="3" fill="none" stroke="#6a3fd1" stroke-width="1.3" transform="rotate(45 7.5 7)"/><ellipse cx="7.5" cy="7" rx="6.3" ry="3" fill="none" stroke="#6a3fd1" stroke-width="1.3" transform="rotate(-45 7.5 7)"/><circle cx="7.5" cy="7" r="1.3" fill="#6a3fd1"/></svg>
<div class="t" style="left:973px;top:831.30px;height:14.40px;line-height:14.40px;font-size:12px;color:#6a3fd1">深度思考</div>
<svg class="a" style="left:1363px;top:830px;" width="16" height="16" viewBox="0 0 16 16"><path d="M8 2Q8.5 7 14 8Q8.5 9 8 14Q7.5 9 2 8Q7.5 7 8 2Z" fill="none" stroke="#c9b8f5" stroke-width="1.3" stroke-linecap="round" stroke-linejoin="round" /><path d="M3 1.5V4M1.8 2.7H4.2" fill="none" stroke="#c9b8f5" stroke-width="1" stroke-linecap="round" stroke-linejoin="round" /></svg>
<svg class="a" style="left:1390px;top:830px;" width="16" height="16" viewBox="0 0 16 16"><path d="M1 1.5L15 8L1 14.5L3.5 8Z" fill="#c8b5f7"/><path d="M3.5 8H8" fill="none" stroke="#fff" stroke-width="1.2" stroke-linecap="round" stroke-linejoin="round" /></svg>
<svg class="a" style="left:989px;top:884px;" width="16" height="15" viewBox="0 0 16 15"><path d="M14.5 4V2.5A1.5 1.5 0 0 0 13 1H2.5A1.5 1.5 0 0 0 1 2.5V12.5A1.5 1.5 0 0 0 2.5 14H7M9 7H15M9 10H15M9 13H15" fill="none" stroke="#333" stroke-width="1.2" stroke-linecap="round" stroke-linejoin="round" /></svg>
<div class="a" style="left:1017px;top:884px;width:1px;height:15px;background:#dcdcdc"></div>
<svg class="a" style="left:1029px;top:884px;" width="16" height="15" viewBox="0 0 16 15"><path d="M15 6V2.5A1.5 1.5 0 0 0 13.5 1H2.5A1.5 1.5 0 0 0 1 2.5V12.5A1.5 1.5 0 0 0 2.5 14H7M4 6H7M5.5 4.5V7.5M9.5 6H12" fill="none" stroke="#333" stroke-width="1.2" stroke-linecap="round" stroke-linejoin="round" /><path d="M9 11L11 13L15 9" fill="none" stroke="#2fa14f" stroke-width="1.3" stroke-linecap="round" stroke-linejoin="round" /></svg>
<svg class="a" style="left:1061px;top:884px;" width="16" height="15" viewBox="0 0 16 15"><path d="M14.5 5V2.5A1.5 1.5 0 0 0 13 1H2.5A1.5 1.5 0 0 0 1 2.5V12.5A1.5 1.5 0 0 0 2.5 14H7M1.5 10L6 6L9 9" fill="none" stroke="#333" stroke-width="1.2" stroke-linecap="round" stroke-linejoin="round" /><rect x="9.5" y="8" width="6" height="7" rx="1" fill="#3a9a4a"/><circle cx="11.5" cy="4.5" r="1.2" fill="#333"/></svg>
<div class="a" style="left:1089px;top:884px;width:1px;height:15px;background:#dcdcdc"></div>
<svg class="a" style="left:1101px;top:884px;" width="17" height="15" viewBox="0 0 17 15"><path d="M5 2Q8 0 9.5 3Q13 2 13.5 5.5Q16.5 7.5 13.5 10.5Q13 14 9.5 13Q6 15 4.5 12Q1 11.5 2 8Q0.5 5 4 4.5Z" fill="none" stroke="#333" stroke-width="1.2" stroke-linecap="round" stroke-linejoin="round" /></svg>
<svg class="a" style="left:1122px;top:889px;" width="8" height="5" viewBox="0 0 8 5"><path d="M1 1L4 4L7 1" fill="none" stroke="#333" stroke-width="1.2" stroke-linecap="round" stroke-linejoin="round" /></svg>
<div class="a" style="left:1144px;top:884px;width:1px;height:15px;background:#dcdcdc"></div>
<svg class="a" style="left:1155px;top:884px;" width="16" height="15" viewBox="0 0 16 15"><path d="M1 1H15V14H1ZM1 5H15M6 5V14" fill="none" stroke="#bdbdbd" stroke-width="1.1" stroke-linecap="round" stroke-linejoin="round" /><circle cx="12" cy="11" r="2" fill="none" stroke="#9fd09f" stroke-width="1"/></svg>
<svg class="a" style="left:1187px;top:885px;" width="18" height="13" viewBox="0 0 18 13"><path d="M1 6.5Q9 -2 17 6.5Q9 15 1 6.5Z" fill="none" stroke="#333" stroke-width="1.3" stroke-linecap="round" stroke-linejoin="round" /><circle cx="9" cy="6.5" r="2.5" fill="none" stroke="#333" stroke-width="1.3"/></svg>
<svg class="a" style="left:1221px;top:884px;" width="16" height="15" viewBox="0 0 16 15"><path d="M4.5 4H11.5V11H4.5ZM8 1V4M8 11V14M1 7.5H4.5M11.5 7.5H15" fill="none" stroke="#bdbdbd" stroke-width="1.1" stroke-linecap="round" stroke-linejoin="round" /></svg>
<svg class="a" style="left:1243px;top:889px;" width="8" height="5" viewBox="0 0 8 5"><path d="M1 1L4 4L7 1" fill="none" stroke="#bdbdbd" stroke-width="1.2" stroke-linecap="round" stroke-linejoin="round" /></svg>
<div class="a" style="left:1260px;top:884px;width:1px;height:15px;background:#dcdcdc"></div>
<svg class="a" style="left:1272px;top:891px;" width="14" height="2" viewBox="0 0 14 2"><rect x="0" y="0" width="14" height="1.4" fill="#333"/></svg>
<div class="t" style="left:1220px;top:883.70px;width:200px;height:15.60px;line-height:15.60px;text-align:center;font-size:13px;color:#333">100%</div>
<svg class="a" style="left:1354px;top:885px;" width="14" height="14" viewBox="0 0 14 14"><path d="M7 1V13M1 7H13" fill="none" stroke="#333" stroke-width="1.4" stroke-linecap="round" stroke-linejoin="round" /></svg>
<svg class="a" style="left:1385px;top:885px;" width="14" height="14" viewBox="0 0 14 14"><path d="M1 4.5V1H4.5M9.5 1H13V4.5M13 9.5V13H9.5M4.5 13H1V9.5" fill="none" stroke="#333" stroke-width="1.4" stroke-linecap="round" stroke-linejoin="round" /></svg>
<svg class="a" style="left:1411px;top:883px;" width="18" height="17" viewBox="0 0 18 17"><ellipse cx="9" cy="7.5" rx="6.5" ry="6" fill="#fff" stroke="#222" stroke-width="1.3"/><circle cx="6.5" cy="7" r="1" fill="#222"/><circle cx="11.5" cy="7" r="1" fill="#222"/><path d="M3 13Q9 18 15 13L14 16H4Z" fill="#2458d6"/></svg>
</body></html>
